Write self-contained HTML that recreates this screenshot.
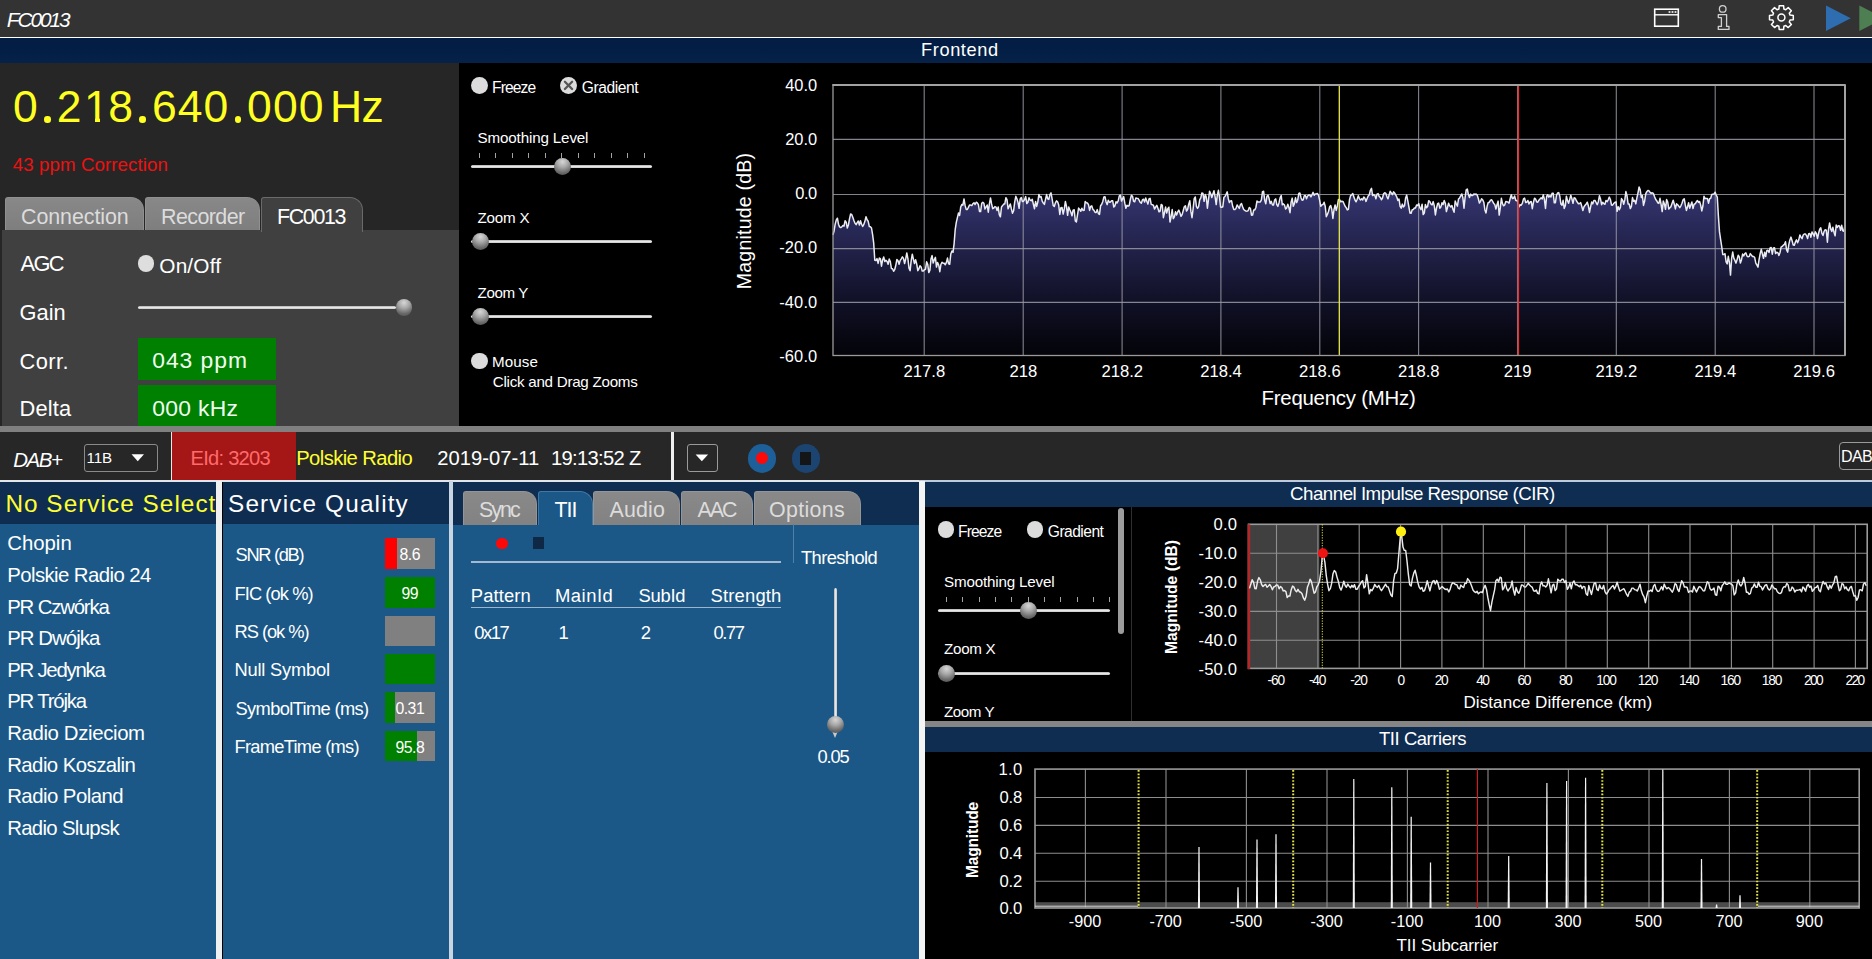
<!DOCTYPE html>
<html><head><meta charset="utf-8"><title>FC0013</title>
<style>
html,body{margin:0;padding:0;background:#000;}
body{width:1872px;height:959px;position:relative;overflow:hidden;font-family:"Liberation Sans", sans-serif;}
.t{position:absolute;white-space:pre;}
.b{position:absolute;}
svg{position:absolute;left:0;top:0;}
</style></head><body>
<div class="b" style="left:0px;top:0px;width:1872px;height:37px;background:#333333;"></div>
<div class="b" style="left:0px;top:37px;width:1872px;height:1px;background:#ffffff;"></div>
<div class="b" style="left:0px;top:38px;width:1872px;height:25px;background:linear-gradient(#031c44,#031f45 60%,#06224a);"></div>
<div class="t" id="title" style="left:6.80px;top:10.18px;font-size:20.8px;line-height:20.8px;color:#fff;font-style:italic;letter-spacing:-2.044px;">FC0013</div>
<div class="t" id="frontend" style="left:921.00px;top:41.40px;font-size:18.2px;line-height:18.2px;color:#fff;letter-spacing:0.617px;">Frontend</div>
<svg width="1872" height="40" viewBox="0 0 1872 40">
<rect x="1654.7" y="9.2" width="23.6" height="17" fill="none" stroke="#fff" stroke-width="1.6"/>
<line x1="1654" y1="14.8" x2="1679" y2="14.8" stroke="#fff" stroke-width="1.4"/>
<g fill="#fff"><rect x="1668.6" y="11.2" width="1.8" height="1.6"/><rect x="1671.6" y="11.2" width="1.8" height="1.6"/><rect x="1674.6" y="11.2" width="1.8" height="1.6"/></g>
<circle cx="1722.7" cy="8.9" r="3.3" fill="none" stroke="#d0d0d0" stroke-width="1.3"/>
<path d="M1718.3 14.6 H1726.6 V26.4 H1729 V29.4 H1718.3 V26.4 H1721.4 V17.6 H1718.3 Z" fill="none" stroke="#d0d0d0" stroke-width="1.3" stroke-linejoin="round"/>
<path id="gear" d="M1793.30 15.39 L1793.30 19.81 L1790.05 20.08 L1789.27 21.96 L1791.37 24.45 L1788.25 27.57 L1785.76 25.47 L1783.88 26.25 L1783.61 29.50 L1779.19 29.50 L1778.92 26.25 L1777.04 25.47 L1774.55 27.57 L1771.43 24.45 L1773.53 21.96 L1772.75 20.08 L1769.50 19.81 L1769.50 15.39 L1772.75 15.12 L1773.53 13.24 L1771.43 10.75 L1774.55 7.63 L1777.04 9.73 L1778.92 8.95 L1779.19 5.70 L1783.61 5.70 L1783.88 8.95 L1785.76 9.73 L1788.25 7.63 L1791.37 10.75 L1789.27 13.24 L1790.05 15.12 Z" fill="none" stroke="#fff" stroke-width="1.5" stroke-linejoin="round"/>
<circle cx="1781.4" cy="17.6" r="3.5" fill="none" stroke="#fff" stroke-width="1.5"/>
<path d="M1826 5.6 L1850.8 18.2 L1826 31 Z" fill="#2d6db0"/>
<path d="M1859.3 5.6 L1884 18.2 L1859.3 31 Z" fill="#4e7f52"/>
</svg>
<div class="b" style="left:0px;top:63px;width:459px;height:363px;background:#262626;"></div>
<div class="t" style="left:12.6px;top:84.8px;width:25.8px;text-align:center;font-size:44.5px;line-height:44.5px;color:#ffff21;">0</div>
<div class="b" style="left:44.0px;top:116.4px;width:6.5px;height:6.5px;border-radius:50%;background:#ffff21;"></div>
<div class="t" style="left:56.2px;top:84.8px;width:25.8px;text-align:center;font-size:44.5px;line-height:44.5px;color:#ffff21;">2</div>
<div class="t" style="left:83.6px;top:84.8px;width:25.8px;text-align:center;font-size:44.5px;line-height:44.5px;color:#ffff21;">1</div>
<div class="b" style="left:84.0px;top:118.3px;width:11.3px;height:4.6px;background:#262626;"></div>
<div class="b" style="left:100.0px;top:118.3px;width:9px;height:4.6px;background:#262626;"></div>
<div class="t" style="left:107.8px;top:84.8px;width:25.8px;text-align:center;font-size:44.5px;line-height:44.5px;color:#ffff21;">8</div>
<div class="b" style="left:139.2px;top:116.4px;width:6.5px;height:6.5px;border-radius:50%;background:#ffff21;"></div>
<div class="t" style="left:151.4px;top:84.8px;width:25.8px;text-align:center;font-size:44.5px;line-height:44.5px;color:#ffff21;">6</div>
<div class="t" style="left:177.2px;top:84.8px;width:25.8px;text-align:center;font-size:44.5px;line-height:44.5px;color:#ffff21;">4</div>
<div class="t" style="left:203.0px;top:84.8px;width:25.8px;text-align:center;font-size:44.5px;line-height:44.5px;color:#ffff21;">0</div>
<div class="b" style="left:234.5px;top:116.4px;width:6.5px;height:6.5px;border-radius:50%;background:#ffff21;"></div>
<div class="t" style="left:246.6px;top:84.8px;width:25.8px;text-align:center;font-size:44.5px;line-height:44.5px;color:#ffff21;">0</div>
<div class="t" style="left:272.4px;top:84.8px;width:25.8px;text-align:center;font-size:44.5px;line-height:44.5px;color:#ffff21;">0</div>
<div class="t" style="left:298.2px;top:84.8px;width:25.8px;text-align:center;font-size:44.5px;line-height:44.5px;color:#ffff21;">0</div>
<div class="t" style="left:330.0px;top:84.8px;font-size:44.5px;line-height:44.5px;color:#ffff21;letter-spacing:-0.6px">Hz</div>
<div class="t" id="ppm" style="left:12.80px;top:156.14px;font-size:18.72px;line-height:18.72px;color:#ee1111;letter-spacing:0.078px;">43 ppm Correction</div>
<div class="b" style="left:5px;top:197px;width:139px;height:34px;background:linear-gradient(#888,#7e7e7e);border:1px solid #909090;border-bottom:none;border-radius:3px 13px 0 0;box-sizing:border-box;"></div>
<div class="b" style="left:145px;top:197px;width:115px;height:34px;background:linear-gradient(#888,#7e7e7e);border:1px solid #909090;border-bottom:none;border-radius:3px 13px 0 0;box-sizing:border-box;"></div>
<div class="b" style="left:2px;top:230.3px;width:457px;height:195.7px;background:#404040;"></div>
<div class="b" style="left:261px;top:197px;width:101.5px;height:35px;background:#404040;border:1px solid #6a6a6a;border-bottom:none;border-radius:3px 13px 0 0;box-sizing:border-box;"></div>
<div class="t" id="tab_conn" style="left:21.00px;top:206.99px;font-size:21.42px;line-height:21.42px;color:#dcdcdc;letter-spacing:-0.066px;">Connection</div>
<div class="t" id="tab_rec" style="left:161.00px;top:206.99px;font-size:21.42px;line-height:21.42px;color:#dcdcdc;letter-spacing:-0.559px;">Recorder</div>
<div class="t" id="tab_fc" style="left:277.00px;top:206.99px;font-size:21.42px;line-height:21.42px;color:#fff;letter-spacing:-1.350px;">FC0013</div>
<div class="t" id="agc" style="left:20.60px;top:252.68px;font-size:21.84px;line-height:21.84px;color:#fff;letter-spacing:-1.669px;">AGC</div>
<div class="b" style="left:137.5px;top:255px;width:16.6px;height:16.6px;border-radius:50%;background:#dedede;"></div>
<div class="t" id="onoff" style="left:159.30px;top:255.80px;font-size:20.8px;line-height:20.8px;color:#fff;letter-spacing:0.160px;">On/Off</div>
<div class="t" id="gain" style="left:19.60px;top:301.58px;font-size:21.84px;line-height:21.84px;color:#fff;letter-spacing:-0.023px;">Gain</div>
<div class="b" style="left:138px;top:306px;width:258px;height:3px;background:linear-gradient(#b0b0b0,#ececec 55%,#c4c4c4);border-radius:1.5px;"></div>
<div class="b" style="left:395.7px;top:299.3px;width:16.6px;height:16.6px;border-radius:50%;background:radial-gradient(circle at 50% 22%,#d6d6d6 0%,#a8a8a8 35%,#6a6a6a 70%,#4a4a4a 100%);"></div>
<div class="t" id="corr" style="left:19.60px;top:350.78px;font-size:21.84px;line-height:21.84px;color:#fff;letter-spacing:0.416px;">Corr.</div>
<div class="b" style="left:138px;top:338px;width:137.5px;height:41.5px;background:#008000;"></div>
<div class="t" id="corrv" style="left:152.20px;top:348.86px;font-size:22.88px;line-height:22.88px;color:#f0fff0;letter-spacing:0.972px;">043 ppm</div>
<div class="t" id="delta" style="left:19.60px;top:398.18px;font-size:21.84px;line-height:21.84px;color:#fff;letter-spacing:0.146px;">Delta</div>
<div class="b" style="left:138px;top:385px;width:137.5px;height:41px;background:#008000;"></div>
<div class="t" id="deltav" style="left:152.20px;top:396.86px;font-size:22.88px;line-height:22.88px;color:#f0fff0;letter-spacing:0.304px;">000 kHz</div>
<div class="b" style="left:471.0px;top:77.0px;width:16.8px;height:16.8px;border-radius:50%;background:#dcdcdc;"></div>
<div class="t" id="freeze1" style="left:492.00px;top:79.60px;font-size:15.6px;line-height:15.6px;color:#fff;letter-spacing:-0.892px;">Freeze</div>
<div class="b" style="left:560.1px;top:77.0px;width:16.8px;height:16.8px;border-radius:50%;background:#dcdcdc;"></div>
<svg width="1872" height="959" style="pointer-events:none"><path d="M564.9 81.80000000000001 L572.1 89.0 M572.1 81.80000000000001 L564.9 89.0" stroke="#555" stroke-width="2.3" stroke-linecap="round"/></svg>
<div class="t" id="grad1" style="left:581.80px;top:79.60px;font-size:15.6px;line-height:15.6px;color:#fff;letter-spacing:-0.440px;">Gradient</div>
<div class="t" id="smooth1" style="left:477.60px;top:130.41px;font-size:15.18px;line-height:15.18px;color:#fff;letter-spacing:-0.153px;">Smoothing Level</div>
<div class="b" style="left:478.9px;top:153px;width:1px;height:5px;background:#a4a4a4;"></div>
<div class="b" style="left:495.4px;top:153px;width:1px;height:5px;background:#a4a4a4;"></div>
<div class="b" style="left:511.8px;top:153px;width:1px;height:5px;background:#a4a4a4;"></div>
<div class="b" style="left:528.3px;top:153px;width:1px;height:5px;background:#a4a4a4;"></div>
<div class="b" style="left:544.7px;top:153px;width:1px;height:5px;background:#a4a4a4;"></div>
<div class="b" style="left:561.2px;top:153px;width:1px;height:5px;background:#a4a4a4;"></div>
<div class="b" style="left:577.7px;top:153px;width:1px;height:5px;background:#a4a4a4;"></div>
<div class="b" style="left:594.1px;top:153px;width:1px;height:5px;background:#a4a4a4;"></div>
<div class="b" style="left:610.6px;top:153px;width:1px;height:5px;background:#a4a4a4;"></div>
<div class="b" style="left:627.0px;top:153px;width:1px;height:5px;background:#a4a4a4;"></div>
<div class="b" style="left:643.5px;top:153px;width:1px;height:5px;background:#a4a4a4;"></div>
<div class="b" style="left:471.2px;top:164.9px;width:181.2px;height:3px;background:linear-gradient(#b0b0b0,#ececec 55%,#c4c4c4);border-radius:1.5px;"></div>
<div class="b" style="left:553.5px;top:158.2px;width:17px;height:17px;border-radius:50%;background:radial-gradient(circle at 50% 22%,#d6d6d6 0%,#a8a8a8 35%,#6a6a6a 70%,#4a4a4a 100%);"></div>
<div class="t" id="zoomx1" style="left:477.60px;top:209.81px;font-size:15.18px;line-height:15.18px;color:#fff;letter-spacing:-0.239px;">Zoom X</div>
<div class="b" style="left:471.2px;top:239.9px;width:181.2px;height:3px;background:linear-gradient(#b0b0b0,#ececec 55%,#c4c4c4);border-radius:1.5px;"></div>
<div class="b" style="left:471.5px;top:233.2px;width:17px;height:17px;border-radius:50%;background:radial-gradient(circle at 50% 22%,#d6d6d6 0%,#a8a8a8 35%,#6a6a6a 70%,#4a4a4a 100%);"></div>
<div class="t" id="zoomy1" style="left:477.60px;top:285.41px;font-size:15.18px;line-height:15.18px;color:#fff;letter-spacing:-0.419px;">Zoom Y</div>
<div class="b" style="left:471.2px;top:314.7px;width:181.2px;height:3px;background:linear-gradient(#b0b0b0,#ececec 55%,#c4c4c4);border-radius:1.5px;"></div>
<div class="b" style="left:471.5px;top:308.0px;width:17px;height:17px;border-radius:50%;background:radial-gradient(circle at 50% 22%,#d6d6d6 0%,#a8a8a8 35%,#6a6a6a 70%,#4a4a4a 100%);"></div>
<div class="b" style="left:471.0px;top:352.6px;width:16.8px;height:16.8px;border-radius:50%;background:#dcdcdc;"></div>
<div class="t" id="mouse" style="left:492.00px;top:354.41px;font-size:15.18px;line-height:15.18px;color:#fff;letter-spacing:0.100px;">Mouse</div>
<div class="t" id="cdz" style="left:492.80px;top:374.21px;font-size:15.18px;line-height:15.18px;color:#fff;letter-spacing:-0.268px;">Click and Drag Zooms</div>
<div class="b" style="left:0px;top:426px;width:1872px;height:6px;background:#808080;"></div>
<div class="b" style="left:0px;top:432px;width:1872px;height:48.4px;background:#272727;"></div>
<div class="t" id="dab" style="left:13.20px;top:449.95px;font-size:20.49px;line-height:20.49px;color:#fff;font-style:italic;letter-spacing:-1.406px;">DAB+</div>
<div class="b" style="left:83.5px;top:444px;width:74px;height:27.5px;border:1px solid #8a8a8a;border-radius:3px;box-sizing:border-box;"></div>
<div class="t" id="ch11b" style="left:86.60px;top:449.81px;font-size:15.18px;line-height:15.18px;color:#fff;letter-spacing:-0.175px;">11B</div>
<svg width="1872" height="959"><path d="M131.5 454.3 H144 L137.75 461.2 Z" fill="#fff"/><path d="M695.6 454.4 H708.1 L701.85 461.2 Z" fill="#fff"/></svg>
<div class="b" style="left:171px;top:432px;width:1px;height:49px;background:#e8e8e8;"></div>
<div class="b" style="left:172px;top:432px;width:124px;height:49px;background:#a51616;"></div>
<div class="t" id="eid" style="left:190.60px;top:448.11px;font-size:20.18px;line-height:20.18px;color:#ff6a6a;letter-spacing:-0.780px;">EId: 3203</div>
<div class="t" id="polskie" style="left:296.20px;top:448.11px;font-size:20.18px;line-height:20.18px;color:#ffff30;letter-spacing:-0.568px;">Polskie Radio</div>
<div class="t" id="date" style="left:437.20px;top:448.11px;font-size:20.18px;line-height:20.18px;color:#fff;letter-spacing:0.037px;">2019-07-11</div>
<div class="t" id="time" style="left:551.00px;top:448.11px;font-size:20.18px;line-height:20.18px;color:#fff;letter-spacing:-0.681px;">19:13:52 Z</div>
<div class="b" style="left:671px;top:432px;width:3px;height:49px;background:#f0f0f0;"></div>
<div class="b" style="left:687.2px;top:444.2px;width:30.8px;height:27.6px;border:1.2px solid #9a9a9a;border-radius:3px;box-sizing:border-box;"></div>
<div class="b" style="left:748px;top:444.4px;width:28px;height:28.2px;border-radius:50%;background:#1d5f98;"></div>
<div class="b" style="left:755.9px;top:452.3px;width:12.2px;height:12.2px;border-radius:50%;background:#ff0808;"></div>
<div class="b" style="left:792px;top:444.4px;width:27.8px;height:28.2px;border-radius:50%;background:#1c4470;"></div>
<div class="b" style="left:800px;top:452.3px;width:10.9px;height:12.3px;background:#131517;"></div>
<div class="b" style="left:1839px;top:442px;width:40px;height:28px;border:1px solid #9a9a9a;border-radius:4px;box-sizing:border-box;background:#262626"></div>
<div class="t" id="dabbtn" style="left:1841.00px;top:447.99px;font-size:16.02px;line-height:16.02px;color:#fff;letter-spacing:-0.624px;">DAB</div>
<div class="b" style="left:0px;top:480.2px;width:919px;height:1.7px;background:#e0e5ec;"></div>
<div class="b" style="left:919px;top:480.2px;width:953px;height:1.8px;background:#bccbde;"></div>
<div class="b" style="left:0px;top:482px;width:216px;height:42.4px;background:#0f2c51;"></div>
<div class="b" style="left:0px;top:524.4px;width:216px;height:435px;background:#1b5887;"></div>
<div class="b" style="left:0;top:482px;width:216px;height:42px;overflow:hidden;">
<div class="t" id="nosvc" style="left:5.40px;top:492.33px;font-size:24.34px;line-height:24.34px;color:#ffff30;letter-spacing:1.038px;position:absolute;margin-top:-482px;">No Service Select</div>
</div>
<div class="t" id="svc0" style="left:7.20px;top:532.81px;font-size:20.38px;line-height:20.38px;color:#fff;letter-spacing:0.001px;">Chopin</div>
<div class="t" id="svc1" style="left:7.20px;top:564.81px;font-size:20.38px;line-height:20.38px;color:#fff;letter-spacing:-0.577px;">Polskie Radio 24</div>
<div class="t" id="svc2" style="left:7.20px;top:597.01px;font-size:20.38px;line-height:20.38px;color:#fff;letter-spacing:-1.167px;">PR Czwórka</div>
<div class="t" id="svc3" style="left:7.20px;top:627.91px;font-size:20.38px;line-height:20.38px;color:#fff;letter-spacing:-0.946px;">PR Dwójka</div>
<div class="t" id="svc4" style="left:7.20px;top:659.81px;font-size:20.38px;line-height:20.38px;color:#fff;letter-spacing:-1.239px;">PR Jedynka</div>
<div class="t" id="svc5" style="left:7.20px;top:691.21px;font-size:20.38px;line-height:20.38px;color:#fff;letter-spacing:-1.191px;">PR Trójka</div>
<div class="t" id="svc6" style="left:7.20px;top:722.71px;font-size:20.38px;line-height:20.38px;color:#fff;letter-spacing:-0.362px;">Radio Dzieciom</div>
<div class="t" id="svc7" style="left:7.20px;top:754.51px;font-size:20.38px;line-height:20.38px;color:#fff;letter-spacing:-0.553px;">Radio Koszalin</div>
<div class="t" id="svc8" style="left:7.20px;top:785.81px;font-size:20.38px;line-height:20.38px;color:#fff;letter-spacing:-0.529px;">Radio Poland</div>
<div class="t" id="svc9" style="left:7.20px;top:817.61px;font-size:20.38px;line-height:20.38px;color:#fff;letter-spacing:-0.689px;">Radio Slupsk</div>
<div class="b" style="left:216px;top:481px;width:6.4px;height:478px;background:#f0f0f0;"></div>
<div class="b" style="left:222.5px;top:482px;width:226.5px;height:42px;background:#0f2c51;"></div>
<div class="b" style="left:222.5px;top:524px;width:226.5px;height:435px;background:#1b5887;"></div>
<div class="t" id="sq" style="left:228.00px;top:492.33px;font-size:24.34px;line-height:24.34px;color:#fff;letter-spacing:1.155px;">Service Quality</div>
<div class="t" id="sq0" style="left:235.50px;top:546.15px;font-size:18.3px;line-height:18.3px;color:#fff;letter-spacing:-1.304px;">SNR (dB)</div>
<div class="t" id="sq1" style="left:234.50px;top:585.15px;font-size:18.3px;line-height:18.3px;color:#fff;letter-spacing:-0.917px;">FIC (ok %)</div>
<div class="t" id="sq2" style="left:234.50px;top:623.35px;font-size:18.3px;line-height:18.3px;color:#fff;letter-spacing:-1.026px;">RS (ok %)</div>
<div class="t" id="sq3" style="left:234.50px;top:660.55px;font-size:18.3px;line-height:18.3px;color:#fff;letter-spacing:-0.197px;">Null Symbol</div>
<div class="t" id="sq4" style="left:235.50px;top:699.65px;font-size:18.3px;line-height:18.3px;color:#fff;letter-spacing:-0.639px;">SymbolTime (ms)</div>
<div class="t" id="sq5" style="left:234.50px;top:737.55px;font-size:18.3px;line-height:18.3px;color:#fff;letter-spacing:-0.715px;">FrameTime (ms)</div>
<div class="b" style="left:384.6px;top:538.1px;width:50.3px;height:30.7px;background:#808080;"></div>
<div class="b" style="left:384.6px;top:538.1px;width:12.5px;height:30.7px;background:#ff0000;"></div>
<div class="t" id="bar0" style="left:309.80px;width:200px;text-align:center;top:546.70px;font-size:15.81px;line-height:15.81px;color:#fff;letter-spacing:-0.5px;padding-left:-0.5px;box-sizing:border-box;">8.6</div>
<div class="b" style="left:384.6px;top:576.9px;width:50.3px;height:30.7px;background:#808080;"></div>
<div class="b" style="left:384.6px;top:576.9px;width:50.3px;height:30.7px;background:#008000;"></div>
<div class="t" id="bar1" style="left:309.80px;width:200px;text-align:center;top:586.10px;font-size:15.81px;line-height:15.81px;color:#fff;letter-spacing:-0.5px;padding-left:-0.5px;box-sizing:border-box;">99</div>
<div class="b" style="left:384.6px;top:615.6px;width:50.3px;height:30.7px;background:#808080;"></div>
<div class="b" style="left:384.6px;top:653.6px;width:50.3px;height:30.7px;background:#808080;"></div>
<div class="b" style="left:384.6px;top:653.6px;width:50.3px;height:30.7px;background:#008000;"></div>
<div class="b" style="left:384.6px;top:692.2px;width:50.3px;height:30.7px;background:#808080;"></div>
<div class="b" style="left:384.6px;top:692.2px;width:10.5px;height:30.7px;background:#008000;"></div>
<div class="t" id="bar4" style="left:309.80px;width:200px;text-align:center;top:701.30px;font-size:15.81px;line-height:15.81px;color:#fff;letter-spacing:-0.5px;padding-left:-0.5px;box-sizing:border-box;">0.31</div>
<div class="b" style="left:384.6px;top:730.5px;width:50.3px;height:30.7px;background:#808080;"></div>
<div class="b" style="left:384.6px;top:730.5px;width:32.3px;height:30.7px;background:#008000;"></div>
<div class="t" id="bar5" style="left:309.80px;width:200px;text-align:center;top:739.50px;font-size:15.81px;line-height:15.81px;color:#fff;letter-spacing:-0.5px;padding-left:-0.5px;box-sizing:border-box;">95.8</div>
<div class="b" style="left:448.8px;top:481px;width:4.5px;height:478px;background:#c9d5e3;"></div>
<div class="b" style="left:453.2px;top:482px;width:465.8px;height:42.6px;background:#0f2c51;"></div>
<div class="b" style="left:453.2px;top:524.6px;width:465.8px;height:435px;background:#1b5887;"></div>
<div class="b" style="left:463px;top:491px;width:74.20000000000005px;height:33.8px;background:linear-gradient(#8a8989,#838282);border:1px solid #959595;border-bottom:none;border-radius:3px 13px 0 0;box-sizing:border-box;"></div>
<div class="b" style="left:538.2px;top:491px;width:54.39999999999998px;height:34px;background:#1b5887;border:1px solid #3f78a6;border-bottom:none;border-radius:3px 13px 0 0;box-sizing:border-box;"></div>
<div class="b" style="left:593.2px;top:491px;width:87.0px;height:33.8px;background:linear-gradient(#8a8989,#838282);border:1px solid #959595;border-bottom:none;border-radius:3px 13px 0 0;box-sizing:border-box;"></div>
<div class="b" style="left:681px;top:491px;width:72px;height:33.8px;background:linear-gradient(#8a8989,#838282);border:1px solid #959595;border-bottom:none;border-radius:3px 13px 0 0;box-sizing:border-box;"></div>
<div class="b" style="left:754px;top:491px;width:107.20000000000005px;height:33.8px;background:linear-gradient(#8a8989,#838282);border:1px solid #959595;border-bottom:none;border-radius:3px 13px 0 0;box-sizing:border-box;"></div>
<div class="t" id="t_sync" style="left:479.00px;top:499.79px;font-size:21.42px;line-height:21.42px;color:#dcdcdc;letter-spacing:-1.962px;">Sync</div>
<div class="t" id="t_tii" style="left:554.50px;top:499.79px;font-size:21.42px;line-height:21.42px;color:#fff;letter-spacing:-1.012px;">TII</div>
<div class="t" id="t_audio" style="left:609.50px;top:499.79px;font-size:21.42px;line-height:21.42px;color:#dcdcdc;letter-spacing:0.164px;">Audio</div>
<div class="t" id="t_aac" style="left:697.50px;top:499.79px;font-size:21.42px;line-height:21.42px;color:#dcdcdc;letter-spacing:-2.028px;">AAC</div>
<div class="t" id="t_opt" style="left:769.00px;top:499.79px;font-size:21.42px;line-height:21.42px;color:#dcdcdc;letter-spacing:0.322px;">Options</div>
<div class="b" style="left:496.2px;top:537.5px;width:11.6px;height:11.6px;border-radius:50%;background:#ff0808;"></div>
<div class="b" style="left:533px;top:537px;width:11px;height:11.8px;background:#0e2846;"></div>
<div class="b" style="left:471px;top:561.3px;width:310px;height:1.7px;background:#a3b9cf;"></div>
<div class="b" style="left:793px;top:524px;width:1px;height:39px;background:#4f7fa6;"></div>
<div class="t" id="thr" style="left:801.00px;top:548.65px;font-size:18.3px;line-height:18.3px;color:#fff;letter-spacing:-0.578px;">Threshold</div>
<div class="t" id="th0" style="left:470.80px;top:587.29px;font-size:18.41px;line-height:18.41px;color:#fff;letter-spacing:0.099px;">Pattern</div>
<div class="t" id="th1" style="left:554.90px;top:587.29px;font-size:18.41px;line-height:18.41px;color:#fff;letter-spacing:0.538px;">MainId</div>
<div class="t" id="th2" style="left:638.50px;top:587.29px;font-size:18.41px;line-height:18.41px;color:#fff;letter-spacing:-0.291px;">SubId</div>
<div class="t" id="th3" style="left:710.60px;top:587.29px;font-size:18.41px;line-height:18.41px;color:#fff;letter-spacing:0.165px;">Strength</div>
<div class="b" style="left:471px;top:607px;width:310px;height:1.1px;background:#9db4ca;"></div>
<div class="t" id="tr0" style="left:474.20px;top:623.60px;font-size:18.41px;line-height:18.41px;color:#fff;letter-spacing:-1.492px;">0x17</div>
<div class="t" id="tr1" style="left:558.60px;top:623.60px;font-size:18.41px;line-height:18.41px;color:#fff;letter-spacing:-3.000px;">1</div>
<div class="t" id="tr2" style="left:640.70px;top:623.60px;font-size:18.41px;line-height:18.41px;color:#fff;letter-spacing:-0.900px;">2</div>
<div class="t" id="tr3" style="left:713.40px;top:623.60px;font-size:18.41px;line-height:18.41px;color:#fff;letter-spacing:-1.396px;">0.77</div>
<div class="b" style="left:833.5px;top:588px;width:3px;height:142px;background:linear-gradient(90deg,#b0b0b0,#ececec 55%,#c4c4c4);border-radius:1.5px;"></div>
<svg width="1872" height="959"><path d="M832 731 L838 731 L835 738 Z" fill="#c8c8c8"/></svg>
<div class="b" style="left:826.5px;top:716.0px;width:17px;height:17px;border-radius:50%;background:radial-gradient(circle at 50% 22%,#d6d6d6 0%,#a8a8a8 35%,#6a6a6a 70%,#4a4a4a 100%);"></div>
<div class="t" id="thrv" style="left:817.50px;top:747.65px;font-size:18.3px;line-height:18.3px;color:#fff;letter-spacing:-1.138px;">0.05</div>
<div class="b" style="left:918.9px;top:481px;width:6.3px;height:478px;background:#f4f4f4;"></div>
<svg width="1872" height="430" viewBox="0 0 1872 430">
<defs><linearGradient id="sg" x1="0" y1="85" x2="0" y2="356" gradientUnits="userSpaceOnUse"><stop offset="0" stop-color="#5c5cc2"/><stop offset="0.5" stop-color="#2b2b5c"/><stop offset="0.78" stop-color="#12122a"/><stop offset="1" stop-color="#030308"/></linearGradient></defs>
<polygon points="833.0,355.5 833.0,234.9 834.1,230.7 835.2,224.1 836.3,219.9 837.4,218.2 838.5,224.2 839.6,226.9 840.7,227.6 841.8,226.9 842.9,225.5 844.0,226.1 845.1,220.7 846.2,222.1 847.3,228.0 848.4,225.0 849.5,218.8 850.6,214.0 851.7,214.4 852.8,217.3 853.9,220.5 855.0,223.1 856.1,224.7 857.2,222.6 858.3,221.0 859.4,225.0 860.5,220.7 861.6,224.2 862.7,226.5 863.8,224.4 864.9,221.3 866.0,216.7 867.1,219.8 868.2,221.3 869.3,226.5 870.4,226.7 871.5,228.0 872.6,234.6 873.7,243.2 874.8,260.3 875.9,260.6 877.0,258.6 878.1,263.4 879.3,258.1 880.4,258.6 881.5,266.2 882.6,260.0 883.7,256.9 884.8,261.5 885.9,260.4 887.0,261.3 888.1,264.3 889.2,259.1 890.3,261.5 891.4,268.5 892.5,268.8 893.6,271.3 894.7,269.7 895.8,265.3 896.9,259.5 898.0,260.8 899.1,264.2 900.2,260.4 901.3,258.8 902.4,256.9 903.5,258.4 904.6,263.6 905.7,258.9 906.8,252.9 907.9,258.6 909.0,268.1 910.1,270.7 911.2,260.6 912.3,254.2 913.4,259.1 914.5,263.5 915.6,259.8 916.7,263.9 917.8,270.7 918.9,268.8 920.0,265.7 921.1,266.9 922.2,271.0 923.3,271.0 924.4,269.7 925.5,269.3 926.6,261.8 927.7,264.2 928.8,272.6 929.9,270.2 931.0,258.9 932.1,255.6 933.2,263.1 934.3,259.7 935.4,257.4 936.5,267.1 937.6,262.5 938.7,265.0 939.8,271.7 940.9,264.5 942.0,262.2 943.1,263.2 944.2,263.3 945.3,264.8 946.4,262.4 947.5,258.1 948.6,263.8 949.7,264.2 950.8,254.0 951.9,250.9 953.0,252.3 954.1,243.8 955.2,229.7 956.3,222.3 957.4,217.6 958.5,212.9 959.6,215.5 960.7,207.1 961.8,204.5 962.9,205.2 964.0,198.9 965.1,205.4 966.2,209.4 967.3,209.5 968.4,207.4 969.5,205.0 970.6,205.1 971.8,205.6 972.9,203.7 974.0,202.7 975.1,204.5 976.2,202.2 977.3,202.9 978.4,204.7 979.5,211.5 980.6,211.6 981.7,203.3 982.8,202.3 983.9,203.4 985.0,209.0 986.1,207.0 987.2,205.0 988.3,212.2 989.4,203.8 990.5,198.0 991.6,203.9 992.7,208.7 993.8,208.0 994.9,206.6 996.0,207.1 997.1,210.5 998.2,206.9 999.3,214.6 1000.4,216.8 1001.5,206.9 1002.6,205.6 1003.7,204.1 1004.8,203.9 1005.9,197.7 1007.0,199.6 1008.1,208.8 1009.2,206.4 1010.3,204.0 1011.4,208.9 1012.5,213.2 1013.6,210.8 1014.7,202.1 1015.8,196.3 1016.9,198.8 1018.0,202.4 1019.1,208.3 1020.2,198.9 1021.3,197.5 1022.4,201.6 1023.5,201.2 1024.6,199.5 1025.7,196.6 1026.8,203.6 1027.9,202.2 1029.0,197.8 1030.1,200.0 1031.2,200.7 1032.3,199.3 1033.4,204.3 1034.5,208.7 1035.6,201.4 1036.7,206.4 1037.8,202.1 1038.9,194.4 1040.0,197.1 1041.1,196.6 1042.2,201.1 1043.3,203.0 1044.4,204.4 1045.5,199.4 1046.6,194.6 1047.7,198.8 1048.8,199.4 1049.9,194.6 1051.0,192.9 1052.1,198.8 1053.2,205.4 1054.3,206.5 1055.4,202.9 1056.5,200.9 1057.6,201.8 1058.7,205.0 1059.8,214.4 1060.9,207.7 1062.0,207.5 1063.2,214.0 1064.3,208.9 1065.4,201.4 1066.5,206.3 1067.6,215.3 1068.7,207.0 1069.8,209.7 1070.9,212.2 1072.0,215.8 1073.1,210.1 1074.2,209.8 1075.3,221.0 1076.4,222.0 1077.5,214.9 1078.6,208.1 1079.7,209.5 1080.8,211.3 1081.9,208.2 1083.0,210.5 1084.1,210.3 1085.2,201.5 1086.3,202.7 1087.4,203.0 1088.5,204.6 1089.6,210.4 1090.7,206.5 1091.8,205.9 1092.9,209.4 1094.0,210.3 1095.1,212.5 1096.2,212.5 1097.3,209.6 1098.4,213.6 1099.5,214.4 1100.6,205.7 1101.7,204.2 1102.8,201.4 1103.9,197.0 1105.0,196.7 1106.1,202.0 1107.2,204.6 1108.3,200.3 1109.4,202.2 1110.5,202.1 1111.6,200.8 1112.7,200.8 1113.8,207.1 1114.9,205.9 1116.0,201.8 1117.1,202.9 1118.2,200.9 1119.3,195.8 1120.4,195.1 1121.5,201.1 1122.6,198.9 1123.7,196.6 1124.8,203.2 1125.9,208.3 1127.0,205.3 1128.1,206.2 1129.2,205.6 1130.3,199.5 1131.4,195.2 1132.5,196.2 1133.6,201.3 1134.7,201.7 1135.8,198.1 1136.9,198.3 1138.0,198.4 1139.1,200.2 1140.2,202.3 1141.3,203.3 1142.4,199.9 1143.5,199.2 1144.6,202.0 1145.7,197.9 1146.8,201.3 1147.9,204.1 1149.0,199.0 1150.1,198.4 1151.2,204.4 1152.3,204.8 1153.4,205.2 1154.5,209.0 1155.7,207.0 1156.8,205.3 1157.9,208.2 1159.0,211.7 1160.1,211.2 1161.2,204.4 1162.3,205.4 1163.4,217.7 1164.5,212.6 1165.6,207.1 1166.7,213.1 1167.8,208.7 1168.9,207.2 1170.0,222.0 1171.1,216.8 1172.2,209.5 1173.3,218.7 1174.4,216.8 1175.5,211.8 1176.6,215.1 1177.7,212.0 1178.8,210.1 1179.9,212.8 1181.0,216.4 1182.1,214.6 1183.2,210.7 1184.3,206.7 1185.4,205.7 1186.5,211.1 1187.6,209.5 1188.7,204.2 1189.8,200.8 1190.9,211.4 1192.0,217.7 1193.1,209.0 1194.2,198.7 1195.3,197.0 1196.4,206.4 1197.5,208.4 1198.6,206.6 1199.7,199.9 1200.8,197.8 1201.9,193.0 1203.0,193.5 1204.1,201.3 1205.2,194.6 1206.3,197.1 1207.4,208.2 1208.5,199.4 1209.6,191.2 1210.7,193.7 1211.8,197.5 1212.9,194.0 1214.0,190.8 1215.1,196.8 1216.2,204.6 1217.3,195.1 1218.4,190.3 1219.5,197.2 1220.6,207.1 1221.7,207.3 1222.8,206.8 1223.9,197.4 1225.0,196.5 1226.1,194.4 1227.2,191.9 1228.3,198.7 1229.4,202.5 1230.5,200.9 1231.6,200.8 1232.7,206.3 1233.8,209.5 1234.9,209.6 1236.0,208.4 1237.1,204.9 1238.2,206.7 1239.3,208.4 1240.4,204.7 1241.5,203.5 1242.6,206.8 1243.7,209.5 1244.8,210.3 1245.9,211.1 1247.1,211.2 1248.2,210.6 1249.3,207.5 1250.4,208.3 1251.5,215.2 1252.6,215.1 1253.7,209.9 1254.8,209.9 1255.9,207.5 1257.0,201.0 1258.1,202.1 1259.2,202.0 1260.3,202.0 1261.4,199.8 1262.5,191.6 1263.6,191.3 1264.7,200.2 1265.8,203.7 1266.9,196.3 1268.0,195.3 1269.1,198.6 1270.2,203.6 1271.3,201.4 1272.4,204.9 1273.5,205.1 1274.6,200.1 1275.7,198.9 1276.8,204.7 1277.9,206.4 1279.0,202.9 1280.1,197.9 1281.2,195.5 1282.3,204.8 1283.4,203.9 1284.5,205.1 1285.6,209.0 1286.7,207.9 1287.8,204.3 1288.9,207.5 1290.0,212.7 1291.1,202.2 1292.2,198.1 1293.3,206.3 1294.4,203.7 1295.5,197.8 1296.6,202.6 1297.7,200.2 1298.8,193.5 1299.9,193.0 1301.0,197.7 1302.1,200.2 1303.2,199.7 1304.3,195.8 1305.4,195.6 1306.5,198.7 1307.6,196.0 1308.7,195.1 1309.8,195.0 1310.9,196.8 1312.0,194.8 1313.1,192.4 1314.2,195.3 1315.3,193.9 1316.4,193.8 1317.5,193.6 1318.6,195.3 1319.7,200.7 1320.8,206.3 1321.9,204.9 1323.0,204.5 1324.1,202.2 1325.2,206.2 1326.3,216.7 1327.4,214.4 1328.5,211.5 1329.6,207.0 1330.7,205.5 1331.8,209.5 1332.9,218.5 1334.0,209.6 1335.1,204.9 1336.2,210.4 1337.3,206.1 1338.4,199.6 1339.6,199.7 1340.7,201.8 1341.8,201.2 1342.9,201.4 1344.0,203.7 1345.1,206.2 1346.2,207.6 1347.3,209.9 1348.4,209.4 1349.5,199.8 1350.6,195.6 1351.7,194.8 1352.8,193.6 1353.9,196.9 1355.0,200.0 1356.1,201.8 1357.2,199.3 1358.3,195.8 1359.4,198.6 1360.5,200.0 1361.6,198.9 1362.7,199.9 1363.8,197.0 1364.9,198.3 1366.0,201.4 1367.1,198.5 1368.2,196.0 1369.3,194.7 1370.4,190.3 1371.5,188.3 1372.6,195.6 1373.7,194.6 1374.8,195.3 1375.9,198.8 1377.0,194.2 1378.1,193.6 1379.2,196.5 1380.3,197.4 1381.4,199.8 1382.5,198.0 1383.6,193.8 1384.7,192.7 1385.8,193.3 1386.9,196.6 1388.0,198.8 1389.1,195.0 1390.2,191.3 1391.3,193.0 1392.4,194.7 1393.5,191.9 1394.6,193.0 1395.7,194.9 1396.8,197.0 1397.9,200.4 1399.0,199.0 1400.1,206.4 1401.2,208.2 1402.3,204.1 1403.4,206.9 1404.5,205.8 1405.6,198.1 1406.7,195.1 1407.8,200.9 1408.9,207.0 1410.0,213.0 1411.1,213.3 1412.2,209.8 1413.3,209.5 1414.4,208.0 1415.5,208.0 1416.6,204.9 1417.7,205.5 1418.8,203.7 1419.9,207.9 1421.0,209.7 1422.1,204.2 1423.2,214.6 1424.3,213.1 1425.4,204.4 1426.5,207.7 1427.6,206.5 1428.7,200.7 1429.8,201.6 1430.9,204.0 1432.1,204.9 1433.2,201.6 1434.3,205.9 1435.4,214.9 1436.5,208.2 1437.6,203.7 1438.7,203.1 1439.8,208.2 1440.9,206.9 1442.0,202.8 1443.1,204.5 1444.2,200.4 1445.3,203.2 1446.4,211.6 1447.5,207.5 1448.6,203.2 1449.7,205.7 1450.8,206.9 1451.9,205.5 1453.0,209.5 1454.1,212.2 1455.2,201.0 1456.3,203.8 1457.4,206.1 1458.5,199.1 1459.6,197.9 1460.7,195.8 1461.8,194.0 1462.9,197.8 1464.0,208.2 1465.1,197.4 1466.2,189.9 1467.3,189.0 1468.4,194.6 1469.5,197.4 1470.6,194.1 1471.7,195.5 1472.8,195.4 1473.9,194.0 1475.0,194.6 1476.1,194.0 1477.2,195.1 1478.3,198.5 1479.4,203.0 1480.5,201.3 1481.6,198.7 1482.7,199.9 1483.8,202.2 1484.9,209.9 1486.0,213.0 1487.1,206.3 1488.2,202.5 1489.3,202.4 1490.4,200.4 1491.5,199.7 1492.6,201.4 1493.7,203.4 1494.8,204.6 1495.9,209.0 1497.0,204.7 1498.1,201.1 1499.2,215.1 1500.3,207.9 1501.4,198.3 1502.5,203.7 1503.6,205.8 1504.7,205.0 1505.8,201.6 1506.9,201.8 1508.0,202.1 1509.1,203.1 1510.2,198.4 1511.3,194.7 1512.4,198.5 1513.5,198.3 1514.6,196.0 1515.7,200.3 1516.8,200.8 1517.9,201.0 1519.0,207.0 1520.1,204.8 1521.2,205.2 1522.3,203.4 1523.5,198.9 1524.6,198.1 1525.7,202.5 1526.8,202.2 1527.9,200.5 1529.0,203.9 1530.1,201.9 1531.2,201.5 1532.3,208.7 1533.4,202.5 1534.5,198.2 1535.6,199.1 1536.7,202.1 1537.8,202.2 1538.9,200.2 1540.0,199.0 1541.1,197.8 1542.2,198.9 1543.3,194.8 1544.4,199.4 1545.5,208.5 1546.6,196.5 1547.7,194.7 1548.8,197.1 1549.9,195.7 1551.0,196.9 1552.1,193.3 1553.2,193.2 1554.3,202.8 1555.4,202.7 1556.5,195.1 1557.6,193.0 1558.7,192.6 1559.8,196.1 1560.9,204.1 1562.0,205.3 1563.1,200.3 1564.2,208.5 1565.3,205.8 1566.4,196.2 1567.5,200.6 1568.6,203.3 1569.7,199.4 1570.8,195.3 1571.9,198.8 1573.0,203.3 1574.1,197.8 1575.2,198.1 1576.3,200.5 1577.4,202.3 1578.5,203.8 1579.6,203.5 1580.7,202.6 1581.8,206.5 1582.9,210.6 1584.0,206.7 1585.1,205.2 1586.2,204.0 1587.3,202.2 1588.4,206.0 1589.5,212.4 1590.6,206.9 1591.7,201.9 1592.8,203.9 1593.9,200.4 1595.0,200.4 1596.1,202.5 1597.2,204.7 1598.3,202.0 1599.4,195.8 1600.5,198.9 1601.6,204.7 1602.7,202.2 1603.8,203.6 1604.9,204.3 1606.0,200.4 1607.1,201.6 1608.2,199.8 1609.3,197.1 1610.4,199.5 1611.5,205.0 1612.6,205.2 1613.7,203.6 1614.8,202.4 1616.0,201.9 1617.1,211.3 1618.2,206.7 1619.3,209.8 1620.4,207.4 1621.5,198.6 1622.6,200.1 1623.7,204.2 1624.8,199.9 1625.9,191.6 1627.0,195.7 1628.1,203.9 1629.2,204.0 1630.3,208.6 1631.4,206.4 1632.5,197.6 1633.6,201.3 1634.7,200.4 1635.8,203.9 1636.9,197.9 1638.0,192.8 1639.1,187.0 1640.2,189.8 1641.3,197.5 1642.4,195.6 1643.5,205.4 1644.6,201.3 1645.7,193.9 1646.8,191.7 1647.9,190.5 1649.0,190.8 1650.1,192.4 1651.2,193.3 1652.3,192.8 1653.4,193.4 1654.5,196.6 1655.6,199.2 1656.7,200.7 1657.8,202.9 1658.9,203.4 1660.0,198.3 1661.1,204.5 1662.2,211.6 1663.3,200.9 1664.4,203.9 1665.5,209.3 1666.6,199.6 1667.7,202.0 1668.8,209.1 1669.9,207.7 1671.0,206.6 1672.1,203.3 1673.2,200.3 1674.3,204.2 1675.4,208.9 1676.5,203.8 1677.6,204.8 1678.7,206.1 1679.8,207.6 1680.9,205.8 1682.0,203.2 1683.1,199.7 1684.2,198.7 1685.3,205.0 1686.4,210.4 1687.5,207.1 1688.6,202.7 1689.7,208.2 1690.8,205.0 1691.9,202.0 1693.0,208.6 1694.1,204.3 1695.2,203.8 1696.3,202.0 1697.4,200.5 1698.5,202.4 1699.6,201.5 1700.7,205.3 1701.8,210.9 1702.9,206.0 1704.0,196.2 1705.1,198.6 1706.2,198.4 1707.4,198.4 1708.5,203.2 1709.6,198.7 1710.7,198.3 1711.8,194.4 1712.9,194.2 1714.0,194.1 1715.1,192.2 1716.2,195.0 1717.3,197.2 1718.4,216.1 1719.5,231.9 1720.6,239.4 1721.7,246.5 1722.8,254.6 1723.9,254.5 1725.0,253.7 1726.1,261.8 1727.2,263.9 1728.3,256.3 1729.4,262.4 1730.5,275.1 1731.6,258.7 1732.7,252.0 1733.8,258.1 1734.9,260.4 1736.0,263.1 1737.1,259.6 1738.2,255.2 1739.3,256.8 1740.4,263.1 1741.5,259.7 1742.6,254.1 1743.7,255.9 1744.8,253.7 1745.9,252.9 1747.0,256.1 1748.1,256.8 1749.2,256.4 1750.3,253.6 1751.4,255.1 1752.5,256.4 1753.6,256.4 1754.7,257.6 1755.8,263.1 1756.9,265.0 1758.0,267.2 1759.1,259.4 1760.2,253.5 1761.3,249.2 1762.4,254.0 1763.5,258.3 1764.6,252.3 1765.7,256.5 1766.8,250.7 1767.9,250.2 1769.0,252.5 1770.1,248.0 1771.2,247.5 1772.3,254.2 1773.4,248.0 1774.5,247.7 1775.6,253.6 1776.7,252.2 1777.8,252.6 1778.9,255.4 1780.0,252.5 1781.1,247.1 1782.2,246.4 1783.3,245.2 1784.4,244.5 1785.5,241.8 1786.6,250.0 1787.7,252.2 1788.8,244.6 1789.9,239.9 1791.0,237.1 1792.1,240.7 1793.2,245.0 1794.3,245.2 1795.4,241.9 1796.5,239.9 1797.6,242.7 1798.7,240.1 1799.9,234.9 1801.0,237.2 1802.1,238.6 1803.2,235.0 1804.3,234.0 1805.4,233.9 1806.5,235.6 1807.6,238.5 1808.7,233.7 1809.8,233.4 1810.9,237.2 1812.0,231.9 1813.1,233.8 1814.2,236.3 1815.3,231.8 1816.4,233.4 1817.5,238.5 1818.6,233.3 1819.7,229.3 1820.8,227.8 1821.9,233.3 1823.0,235.5 1824.1,231.4 1825.2,229.7 1826.3,230.1 1827.4,242.2 1828.5,229.4 1829.6,222.9 1830.7,228.9 1831.8,231.5 1832.9,227.3 1834.0,232.2 1835.1,235.8 1836.2,225.0 1837.3,227.4 1838.4,225.7 1839.5,226.0 1840.6,230.3 1841.7,225.3 1842.8,230.9 1843.9,231.3 1845.0,224.7 1845.0,355.5" fill="url(#sg)"/>
<line x1="924.2" y1="84.9" x2="924.2" y2="355.5" stroke="#9a9aa6" stroke-width="1.1" opacity="0.85"/>
<line x1="1023.2" y1="84.9" x2="1023.2" y2="355.5" stroke="#9a9aa6" stroke-width="1.1" opacity="0.85"/>
<line x1="1122.1" y1="84.9" x2="1122.1" y2="355.5" stroke="#9a9aa6" stroke-width="1.1" opacity="0.85"/>
<line x1="1220.9" y1="84.9" x2="1220.9" y2="355.5" stroke="#9a9aa6" stroke-width="1.1" opacity="0.85"/>
<line x1="1319.8" y1="84.9" x2="1319.8" y2="355.5" stroke="#9a9aa6" stroke-width="1.1" opacity="0.85"/>
<line x1="1418.6" y1="84.9" x2="1418.6" y2="355.5" stroke="#9a9aa6" stroke-width="1.1" opacity="0.85"/>
<line x1="1517.5" y1="84.9" x2="1517.5" y2="355.5" stroke="#9a9aa6" stroke-width="1.1" opacity="0.85"/>
<line x1="1616.3" y1="84.9" x2="1616.3" y2="355.5" stroke="#9a9aa6" stroke-width="1.1" opacity="0.85"/>
<line x1="1715.2" y1="84.9" x2="1715.2" y2="355.5" stroke="#9a9aa6" stroke-width="1.1" opacity="0.85"/>
<line x1="1814.0" y1="84.9" x2="1814.0" y2="355.5" stroke="#9a9aa6" stroke-width="1.1" opacity="0.85"/>
<line x1="833.0" y1="139.4" x2="1845.0" y2="139.4" stroke="#9a9aa6" stroke-width="1.1" opacity="0.85"/>
<line x1="833.0" y1="194.5" x2="1845.0" y2="194.5" stroke="#9a9aa6" stroke-width="1.1" opacity="0.85"/>
<line x1="833.0" y1="248.6" x2="1845.0" y2="248.6" stroke="#9a9aa6" stroke-width="1.1" opacity="0.85"/>
<line x1="833.0" y1="302.4" x2="1845.0" y2="302.4" stroke="#9a9aa6" stroke-width="1.1" opacity="0.85"/>
<polyline points="833.0,234.9 834.1,230.7 835.2,224.1 836.3,219.9 837.4,218.2 838.5,224.2 839.6,226.9 840.7,227.6 841.8,226.9 842.9,225.5 844.0,226.1 845.1,220.7 846.2,222.1 847.3,228.0 848.4,225.0 849.5,218.8 850.6,214.0 851.7,214.4 852.8,217.3 853.9,220.5 855.0,223.1 856.1,224.7 857.2,222.6 858.3,221.0 859.4,225.0 860.5,220.7 861.6,224.2 862.7,226.5 863.8,224.4 864.9,221.3 866.0,216.7 867.1,219.8 868.2,221.3 869.3,226.5 870.4,226.7 871.5,228.0 872.6,234.6 873.7,243.2 874.8,260.3 875.9,260.6 877.0,258.6 878.1,263.4 879.3,258.1 880.4,258.6 881.5,266.2 882.6,260.0 883.7,256.9 884.8,261.5 885.9,260.4 887.0,261.3 888.1,264.3 889.2,259.1 890.3,261.5 891.4,268.5 892.5,268.8 893.6,271.3 894.7,269.7 895.8,265.3 896.9,259.5 898.0,260.8 899.1,264.2 900.2,260.4 901.3,258.8 902.4,256.9 903.5,258.4 904.6,263.6 905.7,258.9 906.8,252.9 907.9,258.6 909.0,268.1 910.1,270.7 911.2,260.6 912.3,254.2 913.4,259.1 914.5,263.5 915.6,259.8 916.7,263.9 917.8,270.7 918.9,268.8 920.0,265.7 921.1,266.9 922.2,271.0 923.3,271.0 924.4,269.7 925.5,269.3 926.6,261.8 927.7,264.2 928.8,272.6 929.9,270.2 931.0,258.9 932.1,255.6 933.2,263.1 934.3,259.7 935.4,257.4 936.5,267.1 937.6,262.5 938.7,265.0 939.8,271.7 940.9,264.5 942.0,262.2 943.1,263.2 944.2,263.3 945.3,264.8 946.4,262.4 947.5,258.1 948.6,263.8 949.7,264.2 950.8,254.0 951.9,250.9 953.0,252.3 954.1,243.8 955.2,229.7 956.3,222.3 957.4,217.6 958.5,212.9 959.6,215.5 960.7,207.1 961.8,204.5 962.9,205.2 964.0,198.9 965.1,205.4 966.2,209.4 967.3,209.5 968.4,207.4 969.5,205.0 970.6,205.1 971.8,205.6 972.9,203.7 974.0,202.7 975.1,204.5 976.2,202.2 977.3,202.9 978.4,204.7 979.5,211.5 980.6,211.6 981.7,203.3 982.8,202.3 983.9,203.4 985.0,209.0 986.1,207.0 987.2,205.0 988.3,212.2 989.4,203.8 990.5,198.0 991.6,203.9 992.7,208.7 993.8,208.0 994.9,206.6 996.0,207.1 997.1,210.5 998.2,206.9 999.3,214.6 1000.4,216.8 1001.5,206.9 1002.6,205.6 1003.7,204.1 1004.8,203.9 1005.9,197.7 1007.0,199.6 1008.1,208.8 1009.2,206.4 1010.3,204.0 1011.4,208.9 1012.5,213.2 1013.6,210.8 1014.7,202.1 1015.8,196.3 1016.9,198.8 1018.0,202.4 1019.1,208.3 1020.2,198.9 1021.3,197.5 1022.4,201.6 1023.5,201.2 1024.6,199.5 1025.7,196.6 1026.8,203.6 1027.9,202.2 1029.0,197.8 1030.1,200.0 1031.2,200.7 1032.3,199.3 1033.4,204.3 1034.5,208.7 1035.6,201.4 1036.7,206.4 1037.8,202.1 1038.9,194.4 1040.0,197.1 1041.1,196.6 1042.2,201.1 1043.3,203.0 1044.4,204.4 1045.5,199.4 1046.6,194.6 1047.7,198.8 1048.8,199.4 1049.9,194.6 1051.0,192.9 1052.1,198.8 1053.2,205.4 1054.3,206.5 1055.4,202.9 1056.5,200.9 1057.6,201.8 1058.7,205.0 1059.8,214.4 1060.9,207.7 1062.0,207.5 1063.2,214.0 1064.3,208.9 1065.4,201.4 1066.5,206.3 1067.6,215.3 1068.7,207.0 1069.8,209.7 1070.9,212.2 1072.0,215.8 1073.1,210.1 1074.2,209.8 1075.3,221.0 1076.4,222.0 1077.5,214.9 1078.6,208.1 1079.7,209.5 1080.8,211.3 1081.9,208.2 1083.0,210.5 1084.1,210.3 1085.2,201.5 1086.3,202.7 1087.4,203.0 1088.5,204.6 1089.6,210.4 1090.7,206.5 1091.8,205.9 1092.9,209.4 1094.0,210.3 1095.1,212.5 1096.2,212.5 1097.3,209.6 1098.4,213.6 1099.5,214.4 1100.6,205.7 1101.7,204.2 1102.8,201.4 1103.9,197.0 1105.0,196.7 1106.1,202.0 1107.2,204.6 1108.3,200.3 1109.4,202.2 1110.5,202.1 1111.6,200.8 1112.7,200.8 1113.8,207.1 1114.9,205.9 1116.0,201.8 1117.1,202.9 1118.2,200.9 1119.3,195.8 1120.4,195.1 1121.5,201.1 1122.6,198.9 1123.7,196.6 1124.8,203.2 1125.9,208.3 1127.0,205.3 1128.1,206.2 1129.2,205.6 1130.3,199.5 1131.4,195.2 1132.5,196.2 1133.6,201.3 1134.7,201.7 1135.8,198.1 1136.9,198.3 1138.0,198.4 1139.1,200.2 1140.2,202.3 1141.3,203.3 1142.4,199.9 1143.5,199.2 1144.6,202.0 1145.7,197.9 1146.8,201.3 1147.9,204.1 1149.0,199.0 1150.1,198.4 1151.2,204.4 1152.3,204.8 1153.4,205.2 1154.5,209.0 1155.7,207.0 1156.8,205.3 1157.9,208.2 1159.0,211.7 1160.1,211.2 1161.2,204.4 1162.3,205.4 1163.4,217.7 1164.5,212.6 1165.6,207.1 1166.7,213.1 1167.8,208.7 1168.9,207.2 1170.0,222.0 1171.1,216.8 1172.2,209.5 1173.3,218.7 1174.4,216.8 1175.5,211.8 1176.6,215.1 1177.7,212.0 1178.8,210.1 1179.9,212.8 1181.0,216.4 1182.1,214.6 1183.2,210.7 1184.3,206.7 1185.4,205.7 1186.5,211.1 1187.6,209.5 1188.7,204.2 1189.8,200.8 1190.9,211.4 1192.0,217.7 1193.1,209.0 1194.2,198.7 1195.3,197.0 1196.4,206.4 1197.5,208.4 1198.6,206.6 1199.7,199.9 1200.8,197.8 1201.9,193.0 1203.0,193.5 1204.1,201.3 1205.2,194.6 1206.3,197.1 1207.4,208.2 1208.5,199.4 1209.6,191.2 1210.7,193.7 1211.8,197.5 1212.9,194.0 1214.0,190.8 1215.1,196.8 1216.2,204.6 1217.3,195.1 1218.4,190.3 1219.5,197.2 1220.6,207.1 1221.7,207.3 1222.8,206.8 1223.9,197.4 1225.0,196.5 1226.1,194.4 1227.2,191.9 1228.3,198.7 1229.4,202.5 1230.5,200.9 1231.6,200.8 1232.7,206.3 1233.8,209.5 1234.9,209.6 1236.0,208.4 1237.1,204.9 1238.2,206.7 1239.3,208.4 1240.4,204.7 1241.5,203.5 1242.6,206.8 1243.7,209.5 1244.8,210.3 1245.9,211.1 1247.1,211.2 1248.2,210.6 1249.3,207.5 1250.4,208.3 1251.5,215.2 1252.6,215.1 1253.7,209.9 1254.8,209.9 1255.9,207.5 1257.0,201.0 1258.1,202.1 1259.2,202.0 1260.3,202.0 1261.4,199.8 1262.5,191.6 1263.6,191.3 1264.7,200.2 1265.8,203.7 1266.9,196.3 1268.0,195.3 1269.1,198.6 1270.2,203.6 1271.3,201.4 1272.4,204.9 1273.5,205.1 1274.6,200.1 1275.7,198.9 1276.8,204.7 1277.9,206.4 1279.0,202.9 1280.1,197.9 1281.2,195.5 1282.3,204.8 1283.4,203.9 1284.5,205.1 1285.6,209.0 1286.7,207.9 1287.8,204.3 1288.9,207.5 1290.0,212.7 1291.1,202.2 1292.2,198.1 1293.3,206.3 1294.4,203.7 1295.5,197.8 1296.6,202.6 1297.7,200.2 1298.8,193.5 1299.9,193.0 1301.0,197.7 1302.1,200.2 1303.2,199.7 1304.3,195.8 1305.4,195.6 1306.5,198.7 1307.6,196.0 1308.7,195.1 1309.8,195.0 1310.9,196.8 1312.0,194.8 1313.1,192.4 1314.2,195.3 1315.3,193.9 1316.4,193.8 1317.5,193.6 1318.6,195.3 1319.7,200.7 1320.8,206.3 1321.9,204.9 1323.0,204.5 1324.1,202.2 1325.2,206.2 1326.3,216.7 1327.4,214.4 1328.5,211.5 1329.6,207.0 1330.7,205.5 1331.8,209.5 1332.9,218.5 1334.0,209.6 1335.1,204.9 1336.2,210.4 1337.3,206.1 1338.4,199.6 1339.6,199.7 1340.7,201.8 1341.8,201.2 1342.9,201.4 1344.0,203.7 1345.1,206.2 1346.2,207.6 1347.3,209.9 1348.4,209.4 1349.5,199.8 1350.6,195.6 1351.7,194.8 1352.8,193.6 1353.9,196.9 1355.0,200.0 1356.1,201.8 1357.2,199.3 1358.3,195.8 1359.4,198.6 1360.5,200.0 1361.6,198.9 1362.7,199.9 1363.8,197.0 1364.9,198.3 1366.0,201.4 1367.1,198.5 1368.2,196.0 1369.3,194.7 1370.4,190.3 1371.5,188.3 1372.6,195.6 1373.7,194.6 1374.8,195.3 1375.9,198.8 1377.0,194.2 1378.1,193.6 1379.2,196.5 1380.3,197.4 1381.4,199.8 1382.5,198.0 1383.6,193.8 1384.7,192.7 1385.8,193.3 1386.9,196.6 1388.0,198.8 1389.1,195.0 1390.2,191.3 1391.3,193.0 1392.4,194.7 1393.5,191.9 1394.6,193.0 1395.7,194.9 1396.8,197.0 1397.9,200.4 1399.0,199.0 1400.1,206.4 1401.2,208.2 1402.3,204.1 1403.4,206.9 1404.5,205.8 1405.6,198.1 1406.7,195.1 1407.8,200.9 1408.9,207.0 1410.0,213.0 1411.1,213.3 1412.2,209.8 1413.3,209.5 1414.4,208.0 1415.5,208.0 1416.6,204.9 1417.7,205.5 1418.8,203.7 1419.9,207.9 1421.0,209.7 1422.1,204.2 1423.2,214.6 1424.3,213.1 1425.4,204.4 1426.5,207.7 1427.6,206.5 1428.7,200.7 1429.8,201.6 1430.9,204.0 1432.1,204.9 1433.2,201.6 1434.3,205.9 1435.4,214.9 1436.5,208.2 1437.6,203.7 1438.7,203.1 1439.8,208.2 1440.9,206.9 1442.0,202.8 1443.1,204.5 1444.2,200.4 1445.3,203.2 1446.4,211.6 1447.5,207.5 1448.6,203.2 1449.7,205.7 1450.8,206.9 1451.9,205.5 1453.0,209.5 1454.1,212.2 1455.2,201.0 1456.3,203.8 1457.4,206.1 1458.5,199.1 1459.6,197.9 1460.7,195.8 1461.8,194.0 1462.9,197.8 1464.0,208.2 1465.1,197.4 1466.2,189.9 1467.3,189.0 1468.4,194.6 1469.5,197.4 1470.6,194.1 1471.7,195.5 1472.8,195.4 1473.9,194.0 1475.0,194.6 1476.1,194.0 1477.2,195.1 1478.3,198.5 1479.4,203.0 1480.5,201.3 1481.6,198.7 1482.7,199.9 1483.8,202.2 1484.9,209.9 1486.0,213.0 1487.1,206.3 1488.2,202.5 1489.3,202.4 1490.4,200.4 1491.5,199.7 1492.6,201.4 1493.7,203.4 1494.8,204.6 1495.9,209.0 1497.0,204.7 1498.1,201.1 1499.2,215.1 1500.3,207.9 1501.4,198.3 1502.5,203.7 1503.6,205.8 1504.7,205.0 1505.8,201.6 1506.9,201.8 1508.0,202.1 1509.1,203.1 1510.2,198.4 1511.3,194.7 1512.4,198.5 1513.5,198.3 1514.6,196.0 1515.7,200.3 1516.8,200.8 1517.9,201.0 1519.0,207.0 1520.1,204.8 1521.2,205.2 1522.3,203.4 1523.5,198.9 1524.6,198.1 1525.7,202.5 1526.8,202.2 1527.9,200.5 1529.0,203.9 1530.1,201.9 1531.2,201.5 1532.3,208.7 1533.4,202.5 1534.5,198.2 1535.6,199.1 1536.7,202.1 1537.8,202.2 1538.9,200.2 1540.0,199.0 1541.1,197.8 1542.2,198.9 1543.3,194.8 1544.4,199.4 1545.5,208.5 1546.6,196.5 1547.7,194.7 1548.8,197.1 1549.9,195.7 1551.0,196.9 1552.1,193.3 1553.2,193.2 1554.3,202.8 1555.4,202.7 1556.5,195.1 1557.6,193.0 1558.7,192.6 1559.8,196.1 1560.9,204.1 1562.0,205.3 1563.1,200.3 1564.2,208.5 1565.3,205.8 1566.4,196.2 1567.5,200.6 1568.6,203.3 1569.7,199.4 1570.8,195.3 1571.9,198.8 1573.0,203.3 1574.1,197.8 1575.2,198.1 1576.3,200.5 1577.4,202.3 1578.5,203.8 1579.6,203.5 1580.7,202.6 1581.8,206.5 1582.9,210.6 1584.0,206.7 1585.1,205.2 1586.2,204.0 1587.3,202.2 1588.4,206.0 1589.5,212.4 1590.6,206.9 1591.7,201.9 1592.8,203.9 1593.9,200.4 1595.0,200.4 1596.1,202.5 1597.2,204.7 1598.3,202.0 1599.4,195.8 1600.5,198.9 1601.6,204.7 1602.7,202.2 1603.8,203.6 1604.9,204.3 1606.0,200.4 1607.1,201.6 1608.2,199.8 1609.3,197.1 1610.4,199.5 1611.5,205.0 1612.6,205.2 1613.7,203.6 1614.8,202.4 1616.0,201.9 1617.1,211.3 1618.2,206.7 1619.3,209.8 1620.4,207.4 1621.5,198.6 1622.6,200.1 1623.7,204.2 1624.8,199.9 1625.9,191.6 1627.0,195.7 1628.1,203.9 1629.2,204.0 1630.3,208.6 1631.4,206.4 1632.5,197.6 1633.6,201.3 1634.7,200.4 1635.8,203.9 1636.9,197.9 1638.0,192.8 1639.1,187.0 1640.2,189.8 1641.3,197.5 1642.4,195.6 1643.5,205.4 1644.6,201.3 1645.7,193.9 1646.8,191.7 1647.9,190.5 1649.0,190.8 1650.1,192.4 1651.2,193.3 1652.3,192.8 1653.4,193.4 1654.5,196.6 1655.6,199.2 1656.7,200.7 1657.8,202.9 1658.9,203.4 1660.0,198.3 1661.1,204.5 1662.2,211.6 1663.3,200.9 1664.4,203.9 1665.5,209.3 1666.6,199.6 1667.7,202.0 1668.8,209.1 1669.9,207.7 1671.0,206.6 1672.1,203.3 1673.2,200.3 1674.3,204.2 1675.4,208.9 1676.5,203.8 1677.6,204.8 1678.7,206.1 1679.8,207.6 1680.9,205.8 1682.0,203.2 1683.1,199.7 1684.2,198.7 1685.3,205.0 1686.4,210.4 1687.5,207.1 1688.6,202.7 1689.7,208.2 1690.8,205.0 1691.9,202.0 1693.0,208.6 1694.1,204.3 1695.2,203.8 1696.3,202.0 1697.4,200.5 1698.5,202.4 1699.6,201.5 1700.7,205.3 1701.8,210.9 1702.9,206.0 1704.0,196.2 1705.1,198.6 1706.2,198.4 1707.4,198.4 1708.5,203.2 1709.6,198.7 1710.7,198.3 1711.8,194.4 1712.9,194.2 1714.0,194.1 1715.1,192.2 1716.2,195.0 1717.3,197.2 1718.4,216.1 1719.5,231.9 1720.6,239.4 1721.7,246.5 1722.8,254.6 1723.9,254.5 1725.0,253.7 1726.1,261.8 1727.2,263.9 1728.3,256.3 1729.4,262.4 1730.5,275.1 1731.6,258.7 1732.7,252.0 1733.8,258.1 1734.9,260.4 1736.0,263.1 1737.1,259.6 1738.2,255.2 1739.3,256.8 1740.4,263.1 1741.5,259.7 1742.6,254.1 1743.7,255.9 1744.8,253.7 1745.9,252.9 1747.0,256.1 1748.1,256.8 1749.2,256.4 1750.3,253.6 1751.4,255.1 1752.5,256.4 1753.6,256.4 1754.7,257.6 1755.8,263.1 1756.9,265.0 1758.0,267.2 1759.1,259.4 1760.2,253.5 1761.3,249.2 1762.4,254.0 1763.5,258.3 1764.6,252.3 1765.7,256.5 1766.8,250.7 1767.9,250.2 1769.0,252.5 1770.1,248.0 1771.2,247.5 1772.3,254.2 1773.4,248.0 1774.5,247.7 1775.6,253.6 1776.7,252.2 1777.8,252.6 1778.9,255.4 1780.0,252.5 1781.1,247.1 1782.2,246.4 1783.3,245.2 1784.4,244.5 1785.5,241.8 1786.6,250.0 1787.7,252.2 1788.8,244.6 1789.9,239.9 1791.0,237.1 1792.1,240.7 1793.2,245.0 1794.3,245.2 1795.4,241.9 1796.5,239.9 1797.6,242.7 1798.7,240.1 1799.9,234.9 1801.0,237.2 1802.1,238.6 1803.2,235.0 1804.3,234.0 1805.4,233.9 1806.5,235.6 1807.6,238.5 1808.7,233.7 1809.8,233.4 1810.9,237.2 1812.0,231.9 1813.1,233.8 1814.2,236.3 1815.3,231.8 1816.4,233.4 1817.5,238.5 1818.6,233.3 1819.7,229.3 1820.8,227.8 1821.9,233.3 1823.0,235.5 1824.1,231.4 1825.2,229.7 1826.3,230.1 1827.4,242.2 1828.5,229.4 1829.6,222.9 1830.7,228.9 1831.8,231.5 1832.9,227.3 1834.0,232.2 1835.1,235.8 1836.2,225.0 1837.3,227.4 1838.4,225.7 1839.5,226.0 1840.6,230.3 1841.7,225.3 1842.8,230.9 1843.9,231.3 1845.0,224.7" fill="none" stroke="#ebebf2" stroke-width="1.5" stroke-linejoin="round"/>
<line x1="1339.3" y1="84.9" x2="1339.3" y2="355.5" stroke="#e8e84a" stroke-width="1.3"/>
<line x1="1518.3" y1="84.9" x2="1518.3" y2="355.5" stroke="#e03030" stroke-width="1.6"/>
<rect x="833.0" y="84.9" width="1012.0" height="270.6" fill="none" stroke="#9a9a9a" stroke-width="1.3"/>
<line x1="832.4" y1="84.9" x2="1845.6" y2="84.9" stroke="#a2a2a2" stroke-width="2"/>
<line x1="1845.0" y1="84.9" x2="1845.0" y2="355.5" stroke="#a2a2a2" stroke-width="2"/>
</svg>
<div class="t" id="sy0" style="left:785.20px;top:77.39px;font-size:16.43px;line-height:16.43px;color:#fff;letter-spacing:0.024px;">40.0</div>
<div class="t" id="sy1" style="left:785.20px;top:131.38px;font-size:16.43px;line-height:16.43px;color:#fff;letter-spacing:0.024px;">20.0</div>
<div class="t" id="sy2" style="left:795.30px;top:185.19px;font-size:16.43px;line-height:16.43px;color:#fff;letter-spacing:-0.448px;">0.0</div>
<div class="t" id="sy3" style="left:779.20px;top:239.19px;font-size:16.43px;line-height:16.43px;color:#fff;letter-spacing:0.151px;">-20.0</div>
<div class="t" id="sy4" style="left:779.20px;top:293.99px;font-size:16.43px;line-height:16.43px;color:#fff;letter-spacing:0.151px;">-40.0</div>
<div class="t" id="sy5" style="left:779.20px;top:348.38px;font-size:16.43px;line-height:16.43px;color:#fff;letter-spacing:0.151px;">-60.0</div>
<div class="t" id="sx0" style="left:903.50px;top:364.08px;font-size:16.64px;line-height:16.64px;color:#fff;letter-spacing:0.011px;">217.8</div>
<div class="t" id="sx1" style="left:1009.50px;top:364.08px;font-size:16.64px;line-height:16.64px;color:#fff;letter-spacing:-0.046px;">218</div>
<div class="t" id="sx2" style="left:1101.40px;top:364.08px;font-size:16.64px;line-height:16.64px;color:#fff;letter-spacing:0.011px;">218.2</div>
<div class="t" id="sx3" style="left:1200.20px;top:364.08px;font-size:16.64px;line-height:16.64px;color:#fff;letter-spacing:0.011px;">218.4</div>
<div class="t" id="sx4" style="left:1299.10px;top:364.08px;font-size:16.64px;line-height:16.64px;color:#fff;letter-spacing:0.011px;">218.6</div>
<div class="t" id="sx5" style="left:1397.90px;top:364.08px;font-size:16.64px;line-height:16.64px;color:#fff;letter-spacing:0.011px;">218.8</div>
<div class="t" id="sx6" style="left:1503.80px;top:364.08px;font-size:16.64px;line-height:16.64px;color:#fff;letter-spacing:-0.046px;">219</div>
<div class="t" id="sx7" style="left:1595.60px;top:364.08px;font-size:16.64px;line-height:16.64px;color:#fff;letter-spacing:0.011px;">219.2</div>
<div class="t" id="sx8" style="left:1694.50px;top:364.08px;font-size:16.64px;line-height:16.64px;color:#fff;letter-spacing:0.011px;">219.4</div>
<div class="t" id="sx9" style="left:1793.30px;top:364.08px;font-size:16.64px;line-height:16.64px;color:#fff;letter-spacing:0.011px;">219.6</div>
<div class="t" id="freqlab" style="left:1261.50px;top:388.21px;font-size:20.38px;line-height:20.38px;color:#fff;letter-spacing:-0.212px;">Frequency (MHz)</div>
<div class="t" id="maglab" style="left:744.4px;top:221px;font-size:19.6px;line-height:20px;color:#fff;transform:translate(-50%,-50%) rotate(-90deg);letter-spacing:0.174px">Magnitude (dB)</div>
<div class="b" style="left:925px;top:482px;width:947px;height:24.8px;background:#0f2c51;"></div>
<div class="t" id="cirtitle" style="left:1290.00px;top:484.94px;font-size:18.72px;line-height:18.72px;color:#fff;letter-spacing:-0.497px;">Channel Impulse Response (CIR)</div>
<div class="b" style="left:937.8px;top:521.3px;width:16.4px;height:16.4px;border-radius:50%;background:#dcdcdc;"></div>
<div class="t" id="freeze2" style="left:958.00px;top:523.60px;font-size:15.6px;line-height:15.6px;color:#fff;letter-spacing:-0.892px;">Freeze</div>
<div class="b" style="left:1026.5px;top:521.3px;width:16.4px;height:16.4px;border-radius:50%;background:#dcdcdc;"></div>
<div class="t" id="grad2" style="left:1047.80px;top:523.60px;font-size:15.6px;line-height:15.6px;color:#fff;letter-spacing:-0.525px;">Gradient</div>
<div class="b" style="left:1117.7px;top:508px;width:6.3px;height:126px;border-radius:3.2px;background:#9c9c9c;"></div>
<div class="b" style="left:1131px;top:507px;width:1px;height:214px;background:#2e2e2e;"></div>
<div class="t" id="smooth2" style="left:944.00px;top:573.81px;font-size:15.18px;line-height:15.18px;color:#fff;letter-spacing:-0.168px;">Smoothing Level</div>
<div class="b" style="left:946.1px;top:597.2px;width:1px;height:4.7999999999999545px;background:#a4a4a4;"></div>
<div class="b" style="left:962.4px;top:597.2px;width:1px;height:4.7999999999999545px;background:#a4a4a4;"></div>
<div class="b" style="left:978.7px;top:597.2px;width:1px;height:4.7999999999999545px;background:#a4a4a4;"></div>
<div class="b" style="left:995.0px;top:597.2px;width:1px;height:4.7999999999999545px;background:#a4a4a4;"></div>
<div class="b" style="left:1011.3px;top:597.2px;width:1px;height:4.7999999999999545px;background:#a4a4a4;"></div>
<div class="b" style="left:1027.6px;top:597.2px;width:1px;height:4.7999999999999545px;background:#a4a4a4;"></div>
<div class="b" style="left:1043.9px;top:597.2px;width:1px;height:4.7999999999999545px;background:#a4a4a4;"></div>
<div class="b" style="left:1060.2px;top:597.2px;width:1px;height:4.7999999999999545px;background:#a4a4a4;"></div>
<div class="b" style="left:1076.5px;top:597.2px;width:1px;height:4.7999999999999545px;background:#a4a4a4;"></div>
<div class="b" style="left:1092.8px;top:597.2px;width:1px;height:4.7999999999999545px;background:#a4a4a4;"></div>
<div class="b" style="left:1109.1px;top:597.2px;width:1px;height:4.7999999999999545px;background:#a4a4a4;"></div>
<div class="b" style="left:938px;top:608.9px;width:172px;height:3px;background:linear-gradient(#b0b0b0,#ececec 55%,#c4c4c4);border-radius:1.5px;"></div>
<div class="b" style="left:1019.5px;top:602.2px;width:17px;height:17px;border-radius:50%;background:radial-gradient(circle at 50% 22%,#d6d6d6 0%,#a8a8a8 35%,#6a6a6a 70%,#4a4a4a 100%);"></div>
<div class="t" id="zoomx2" style="left:944.00px;top:641.41px;font-size:15.18px;line-height:15.18px;color:#fff;letter-spacing:-0.279px;">Zoom X</div>
<div class="b" style="left:938px;top:671.5px;width:172px;height:3px;background:linear-gradient(#b0b0b0,#ececec 55%,#c4c4c4);border-radius:1.5px;"></div>
<div class="b" style="left:938.0px;top:664.8px;width:17px;height:17px;border-radius:50%;background:radial-gradient(circle at 50% 22%,#d6d6d6 0%,#a8a8a8 35%,#6a6a6a 70%,#4a4a4a 100%);"></div>
<div class="t" id="zoomy2" style="left:944.00px;top:704.21px;font-size:15.18px;line-height:15.18px;color:#fff;letter-spacing:-0.439px;">Zoom Y</div>
<div class="b" style="left:925px;top:720.5px;width:947px;height:6.7px;background:#858585;"></div>
<svg width="1872" height="959" viewBox="0 0 1872 959">
<rect x="1248.5" y="524.3" width="71.0" height="144.10000000000002" fill="#404040"/>
<line x1="1276.5" y1="524.3" x2="1276.5" y2="668.4" stroke="#8e8e8e" stroke-width="1.1"/>
<line x1="1317.9" y1="524.3" x2="1317.9" y2="668.4" stroke="#8e8e8e" stroke-width="1.1"/>
<line x1="1359.2" y1="524.3" x2="1359.2" y2="668.4" stroke="#8e8e8e" stroke-width="1.1"/>
<line x1="1400.6" y1="524.3" x2="1400.6" y2="668.4" stroke="#8e8e8e" stroke-width="1.1"/>
<line x1="1441.9" y1="524.3" x2="1441.9" y2="668.4" stroke="#8e8e8e" stroke-width="1.1"/>
<line x1="1483.3" y1="524.3" x2="1483.3" y2="668.4" stroke="#8e8e8e" stroke-width="1.1"/>
<line x1="1524.6" y1="524.3" x2="1524.6" y2="668.4" stroke="#8e8e8e" stroke-width="1.1"/>
<line x1="1566.0" y1="524.3" x2="1566.0" y2="668.4" stroke="#8e8e8e" stroke-width="1.1"/>
<line x1="1607.3" y1="524.3" x2="1607.3" y2="668.4" stroke="#8e8e8e" stroke-width="1.1"/>
<line x1="1648.7" y1="524.3" x2="1648.7" y2="668.4" stroke="#8e8e8e" stroke-width="1.1"/>
<line x1="1690.0" y1="524.3" x2="1690.0" y2="668.4" stroke="#8e8e8e" stroke-width="1.1"/>
<line x1="1731.4" y1="524.3" x2="1731.4" y2="668.4" stroke="#8e8e8e" stroke-width="1.1"/>
<line x1="1772.7" y1="524.3" x2="1772.7" y2="668.4" stroke="#8e8e8e" stroke-width="1.1"/>
<line x1="1814.1" y1="524.3" x2="1814.1" y2="668.4" stroke="#8e8e8e" stroke-width="1.1"/>
<line x1="1855.4" y1="524.3" x2="1855.4" y2="668.4" stroke="#8e8e8e" stroke-width="1.1"/>
<line x1="1248.5" y1="553.3" x2="1867.2" y2="553.3" stroke="#8e8e8e" stroke-width="1.1"/>
<line x1="1248.5" y1="582.4" x2="1867.2" y2="582.4" stroke="#8e8e8e" stroke-width="1.1"/>
<line x1="1248.5" y1="611.4" x2="1867.2" y2="611.4" stroke="#8e8e8e" stroke-width="1.1"/>
<line x1="1248.5" y1="640.2" x2="1867.2" y2="640.2" stroke="#8e8e8e" stroke-width="1.1"/>
<rect x="1248.5" y="524.3" width="618.7" height="144.10000000000002" fill="none" stroke="#9a9a9a" stroke-width="1.6"/>
<line x1="1248.9" y1="524.3" x2="1248.9" y2="669.0" stroke="#b02828" stroke-width="2.6"/>
<line x1="1322.3" y1="524.3" x2="1322.3" y2="668.4" stroke="#e6e640" stroke-width="1" stroke-dasharray="1.2 1.4"/>
<polyline points="1249.5,588.4 1250.8,584.3 1252.2,579.8 1253.5,582.1 1254.9,588.5 1256.2,588.7 1257.6,581.0 1258.9,577.6 1260.3,579.8 1261.6,584.5 1263.0,586.6 1264.3,585.2 1265.7,584.5 1267.0,587.3 1268.4,586.0 1269.7,584.5 1271.0,586.4 1272.4,589.8 1273.7,587.0 1275.1,586.3 1276.4,584.9 1277.8,585.3 1279.1,588.8 1280.5,586.5 1281.8,587.5 1283.2,590.9 1284.5,590.5 1285.9,591.6 1287.2,597.5 1288.5,596.0 1289.9,596.0 1291.2,589.7 1292.6,586.1 1293.9,587.1 1295.3,590.4 1296.6,591.8 1298.0,589.3 1299.3,591.7 1300.7,592.2 1302.0,593.7 1303.4,597.9 1304.7,600.2 1306.1,596.3 1307.4,587.3 1308.7,584.1 1310.1,579.2 1311.4,581.7 1312.8,587.7 1314.1,593.2 1315.5,591.9 1316.8,587.0 1318.2,584.8 1319.5,581.2 1320.9,571.8 1322.2,557.1 1323.6,555.6 1324.9,562.4 1326.3,575.8 1327.6,584.2 1328.9,590.7 1330.3,588.7 1331.6,583.6 1333.0,573.7 1334.3,570.6 1335.7,572.0 1337.0,577.1 1338.4,581.5 1339.7,587.4 1341.1,590.1 1342.4,586.4 1343.8,581.2 1345.1,585.5 1346.4,587.2 1347.8,584.1 1349.1,586.1 1350.5,587.8 1351.8,585.3 1353.2,587.2 1354.5,584.7 1355.9,589.2 1357.2,589.2 1358.6,586.5 1359.9,584.6 1361.3,582.1 1362.6,580.7 1364.0,587.9 1365.3,586.5 1366.6,574.7 1368.0,583.9 1369.3,593.8 1370.7,589.4 1372.0,590.7 1373.4,588.2 1374.7,584.5 1376.1,586.5 1377.4,587.4 1378.8,585.4 1380.1,588.6 1381.5,590.7 1382.8,588.7 1384.2,586.4 1385.5,584.2 1386.8,586.7 1388.2,586.9 1389.5,590.9 1390.9,595.0 1392.2,596.6 1393.6,580.9 1394.9,573.6 1396.3,573.0 1397.6,568.6 1399.0,552.1 1400.3,536.8 1401.7,536.1 1403.0,547.1 1404.3,550.4 1405.7,550.5 1407.0,561.0 1408.4,574.7 1409.7,584.7 1411.1,586.1 1412.4,578.4 1413.8,573.1 1415.1,570.2 1416.5,576.0 1417.8,582.4 1419.2,587.2 1420.5,589.0 1421.9,587.4 1423.2,591.3 1424.5,590.7 1425.9,586.2 1427.2,580.8 1428.6,586.3 1429.9,590.9 1431.3,584.9 1432.6,581.4 1434.0,580.6 1435.3,583.9 1436.7,580.5 1438.0,583.5 1439.4,589.2 1440.7,588.0 1442.1,586.6 1443.4,587.8 1444.7,589.0 1446.1,589.5 1447.4,589.0 1448.8,591.9 1450.1,589.4 1451.5,584.5 1452.8,582.8 1454.2,583.4 1455.5,584.6 1456.9,584.7 1458.2,588.1 1459.6,588.9 1460.9,585.1 1462.2,586.6 1463.6,587.5 1464.9,583.2 1466.3,583.4 1467.6,578.6 1469.0,580.4 1470.3,582.7 1471.7,586.3 1473.0,590.1 1474.4,591.7 1475.7,592.6 1477.1,591.3 1478.4,593.8 1479.8,592.4 1481.1,591.9 1482.4,592.7 1483.8,588.1 1485.1,585.3 1486.5,589.4 1487.8,597.4 1489.2,604.7 1490.5,610.7 1491.9,602.2 1493.2,596.1 1494.6,589.9 1495.9,580.7 1497.3,579.3 1498.6,581.7 1500.0,577.2 1501.3,577.9 1502.6,589.7 1504.0,587.8 1505.3,582.7 1506.7,588.6 1508.0,591.0 1509.4,588.6 1510.7,587.1 1512.1,581.0 1513.4,589.8 1514.8,595.1 1516.1,587.5 1517.5,591.8 1518.8,593.3 1520.1,590.2 1521.5,584.9 1522.8,585.1 1524.2,586.9 1525.5,587.1 1526.9,585.4 1528.2,583.3 1529.6,585.0 1530.9,586.2 1532.3,587.4 1533.6,590.8 1535.0,591.3 1536.3,590.1 1537.7,593.4 1539.0,593.9 1540.3,585.0 1541.7,581.9 1543.0,585.9 1544.4,585.8 1545.7,587.1 1547.1,585.3 1548.4,578.8 1549.8,585.9 1551.1,592.8 1552.5,585.4 1553.8,584.2 1555.2,590.6 1556.5,588.8 1557.8,579.2 1559.2,580.8 1560.5,581.1 1561.9,579.2 1563.2,579.3 1564.6,582.5 1565.9,580.6 1567.3,589.3 1568.6,587.4 1570.0,583.0 1571.3,588.8 1572.7,582.7 1574.0,580.9 1575.4,584.8 1576.7,584.6 1578.0,585.7 1579.4,586.7 1580.7,585.2 1582.1,588.6 1583.4,586.4 1584.8,586.9 1586.1,593.7 1587.5,595.3 1588.8,585.6 1590.2,590.6 1591.5,594.4 1592.9,588.1 1594.2,583.3 1595.6,582.9 1596.9,589.4 1598.2,590.5 1599.6,585.0 1600.9,588.2 1602.3,588.9 1603.6,585.5 1605.0,591.7 1606.3,594.0 1607.7,592.5 1609.0,589.7 1610.4,588.6 1611.7,586.7 1613.1,585.6 1614.4,589.1 1615.7,586.4 1617.1,582.2 1618.4,586.7 1619.8,591.1 1621.1,590.4 1622.5,589.5 1623.8,588.7 1625.2,591.2 1626.5,594.2 1627.9,596.4 1629.2,592.4 1630.6,591.1 1631.9,588.1 1633.3,588.1 1634.6,589.6 1635.9,589.9 1637.3,591.0 1638.6,588.0 1640.0,584.2 1641.3,590.6 1642.7,594.7 1644.0,596.9 1645.4,602.7 1646.7,596.3 1648.1,591.0 1649.4,591.3 1650.8,590.0 1652.1,591.5 1653.5,586.1 1654.8,584.4 1656.1,589.0 1657.5,591.2 1658.8,591.4 1660.2,589.3 1661.5,586.7 1662.9,590.0 1664.2,584.1 1665.6,587.3 1666.9,588.8 1668.3,587.5 1669.6,588.5 1671.0,590.3 1672.3,592.2 1673.6,589.2 1675.0,583.7 1676.3,584.6 1677.7,589.5 1679.0,591.5 1680.4,585.6 1681.7,580.8 1683.1,583.0 1684.4,587.0 1685.8,586.9 1687.1,587.5 1688.5,592.4 1689.8,591.1 1691.2,590.9 1692.5,592.0 1693.8,586.3 1695.2,589.4 1696.5,592.0 1697.9,588.9 1699.2,586.6 1700.6,587.2 1701.9,588.9 1703.3,590.9 1704.6,590.8 1706.0,586.1 1707.3,581.7 1708.7,582.9 1710.0,588.6 1711.4,590.2 1712.7,589.4 1714.0,588.1 1715.4,594.8 1716.7,595.2 1718.1,586.2 1719.4,587.0 1720.8,590.8 1722.1,585.8 1723.5,583.9 1724.8,581.8 1726.2,584.3 1727.5,584.3 1728.9,582.9 1730.2,583.7 1731.5,584.0 1732.9,585.8 1734.2,594.9 1735.6,592.9 1736.9,584.2 1738.3,579.9 1739.6,584.5 1741.0,585.9 1742.3,583.9 1743.7,577.5 1745.0,582.9 1746.4,592.2 1747.7,592.2 1749.1,594.3 1750.4,593.4 1751.7,588.1 1753.1,587.0 1754.4,583.9 1755.8,587.3 1757.1,587.3 1758.5,582.2 1759.8,586.2 1761.2,586.8 1762.5,590.0 1763.9,587.3 1765.2,585.2 1766.6,584.7 1767.9,588.5 1769.3,590.0 1770.6,588.7 1771.9,584.9 1773.3,587.2 1774.6,588.8 1776.0,588.8 1777.3,591.7 1778.7,593.1 1780.0,593.5 1781.4,592.7 1782.7,588.4 1784.1,586.6 1785.4,587.1 1786.8,583.4 1788.1,584.9 1789.4,590.8 1790.8,590.5 1792.1,587.1 1793.5,588.5 1794.8,592.0 1796.2,590.2 1797.5,590.2 1798.9,589.9 1800.2,589.3 1801.6,591.8 1802.9,587.0 1804.3,588.6 1805.6,591.2 1807.0,586.0 1808.3,584.4 1809.6,587.3 1811.0,586.1 1812.3,591.3 1813.7,589.8 1815.0,587.6 1816.4,587.3 1817.7,585.4 1819.1,590.5 1820.4,591.7 1821.8,585.4 1823.1,581.5 1824.5,584.0 1825.8,583.1 1827.2,586.9 1828.5,589.5 1829.8,585.3 1831.2,588.3 1832.5,585.2 1833.9,582.9 1835.2,576.8 1836.6,576.3 1837.9,583.8 1839.3,590.7 1840.6,589.7 1842.0,583.6 1843.3,584.4 1844.7,588.7 1846.0,586.9 1847.3,589.6 1848.7,590.7 1850.0,587.5 1851.4,586.4 1852.7,591.5 1854.1,596.1 1855.4,595.7 1856.8,600.3 1858.1,597.5 1859.5,589.9 1860.8,589.8 1862.2,590.8 1863.5,584.0 1864.9,582.7 1866.2,585.8" fill="none" stroke="#ececec" stroke-width="1.45" stroke-linejoin="round"/>
<circle cx="1322.9" cy="553.3" r="5" fill="#ee1414"/>
<circle cx="1401" cy="531.7" r="5.1" fill="#fff010"/>
<rect x="1035" y="902.2" width="824.2" height="5.6" fill="#4c4c4c"/>
<line x1="1085.4" y1="769.1" x2="1085.4" y2="908.0" stroke="#8e8e8e" stroke-width="1.1"/>
<line x1="1166.0" y1="769.1" x2="1166.0" y2="908.0" stroke="#8e8e8e" stroke-width="1.1"/>
<line x1="1246.4" y1="769.1" x2="1246.4" y2="908.0" stroke="#8e8e8e" stroke-width="1.1"/>
<line x1="1327.0" y1="769.1" x2="1327.0" y2="908.0" stroke="#8e8e8e" stroke-width="1.1"/>
<line x1="1407.4" y1="769.1" x2="1407.4" y2="908.0" stroke="#8e8e8e" stroke-width="1.1"/>
<line x1="1488.0" y1="769.1" x2="1488.0" y2="908.0" stroke="#8e8e8e" stroke-width="1.1"/>
<line x1="1568.4" y1="769.1" x2="1568.4" y2="908.0" stroke="#8e8e8e" stroke-width="1.1"/>
<line x1="1649.0" y1="769.1" x2="1649.0" y2="908.0" stroke="#8e8e8e" stroke-width="1.1"/>
<line x1="1729.4" y1="769.1" x2="1729.4" y2="908.0" stroke="#8e8e8e" stroke-width="1.1"/>
<line x1="1809.8" y1="769.1" x2="1809.8" y2="908.0" stroke="#8e8e8e" stroke-width="1.1"/>
<line x1="1035" y1="797.5" x2="1859.2" y2="797.5" stroke="#8e8e8e" stroke-width="1.1"/>
<line x1="1035" y1="825.4" x2="1859.2" y2="825.4" stroke="#8e8e8e" stroke-width="1.1"/>
<line x1="1035" y1="853.2" x2="1859.2" y2="853.2" stroke="#8e8e8e" stroke-width="1.1"/>
<line x1="1035" y1="881.2" x2="1859.2" y2="881.2" stroke="#8e8e8e" stroke-width="1.1"/>
<rect x="1035" y="769.1" width="824.2" height="138.89999999999998" fill="none" stroke="#9a9a9a" stroke-width="1.6"/>
<line x1="1138.6" y1="770.1" x2="1138.6" y2="908.0" stroke="#e4e43c" stroke-width="2" stroke-dasharray="1.7 1.65"/>
<line x1="1293.2" y1="770.1" x2="1293.2" y2="908.0" stroke="#e4e43c" stroke-width="2" stroke-dasharray="1.7 1.65"/>
<line x1="1447.7" y1="770.1" x2="1447.7" y2="908.0" stroke="#e4e43c" stroke-width="2" stroke-dasharray="1.7 1.65"/>
<line x1="1602.3" y1="770.1" x2="1602.3" y2="908.0" stroke="#e4e43c" stroke-width="2" stroke-dasharray="1.7 1.65"/>
<line x1="1757.2" y1="770.1" x2="1757.2" y2="908.0" stroke="#e4e43c" stroke-width="2" stroke-dasharray="1.7 1.65"/>
<line x1="1477.4" y1="769.1" x2="1477.4" y2="908.0" stroke="#c42222" stroke-width="1.25"/>
<line x1="1035" y1="906.2" x2="1138" y2="906.2" stroke="#d8d8d8" stroke-width="1"/>
<line x1="1758" y1="906.2" x2="1859.2" y2="906.2" stroke="#d8d8d8" stroke-width="1"/>
<path d="M1197.95 908.0 L1198.40 847 L1199.60 847 L1200.05 908.0 Z" fill="#f4f4f4"/>
<path d="M1236.95 908.0 L1237.40 887.3 L1238.60 887.3 L1239.05 908.0 Z" fill="#f4f4f4"/>
<path d="M1255.95 908.0 L1256.40 839.4 L1257.60 839.4 L1258.05 908.0 Z" fill="#f4f4f4"/>
<path d="M1274.95 908.0 L1275.40 834.2 L1276.60 834.2 L1277.05 908.0 Z" fill="#f4f4f4"/>
<path d="M1352.75 908.0 L1353.20 779 L1354.40 779 L1354.85 908.0 Z" fill="#f4f4f4"/>
<path d="M1390.75 908.0 L1391.20 787.3 L1392.40 787.3 L1392.85 908.0 Z" fill="#f4f4f4"/>
<path d="M1410.15 908.0 L1410.60 816.8 L1411.80 816.8 L1412.25 908.0 Z" fill="#f4f4f4"/>
<path d="M1429.45 908.0 L1429.90 862.4 L1431.10 862.4 L1431.55 908.0 Z" fill="#f4f4f4"/>
<path d="M1507.65 908.0 L1508.10 856 L1509.30 856 L1509.75 908.0 Z" fill="#f4f4f4"/>
<path d="M1545.85 908.0 L1546.30 783 L1547.50 783 L1547.95 908.0 Z" fill="#f4f4f4"/>
<path d="M1565.55 908.0 L1566.00 781 L1567.20 781 L1567.65 908.0 Z" fill="#f4f4f4"/>
<path d="M1584.55 908.0 L1585.00 777.8 L1586.20 777.8 L1586.65 908.0 Z" fill="#f4f4f4"/>
<path d="M1661.75 908.0 L1662.20 769.4 L1663.40 769.4 L1663.85 908.0 Z" fill="#f4f4f4"/>
<path d="M1700.45 908.0 L1700.90 859 L1702.10 859 L1702.55 908.0 Z" fill="#f4f4f4"/>
<path d="M1715.55 908.0 L1716.00 904.5 L1717.20 904.5 L1717.65 908.0 Z" fill="#f4f4f4"/>
<path d="M1738.95 908.0 L1739.40 895.3 L1740.60 895.3 L1741.05 908.0 Z" fill="#f4f4f4"/>
</svg>
<div class="t" id="cy0" style="left:1213.50px;top:517.28px;font-size:16.64px;line-height:16.64px;color:#fff;letter-spacing:0.218px;">0.0</div>
<div class="t" id="cy1" style="left:1198.50px;top:546.28px;font-size:16.64px;line-height:16.64px;color:#fff;letter-spacing:0.163px;">-10.0</div>
<div class="t" id="cy2" style="left:1198.50px;top:575.28px;font-size:16.64px;line-height:16.64px;color:#fff;letter-spacing:0.163px;">-20.0</div>
<div class="t" id="cy3" style="left:1198.50px;top:604.28px;font-size:16.64px;line-height:16.64px;color:#fff;letter-spacing:0.163px;">-30.0</div>
<div class="t" id="cy4" style="left:1198.50px;top:633.28px;font-size:16.64px;line-height:16.64px;color:#fff;letter-spacing:0.163px;">-40.0</div>
<div class="t" id="cy5" style="left:1198.50px;top:662.28px;font-size:16.64px;line-height:16.64px;color:#fff;letter-spacing:0.163px;">-50.0</div>
<div class="t" id="cx0" style="left:1267.55px;top:674.34px;font-size:13.73px;line-height:13.73px;color:#fff;letter-spacing:-1.149px;">-60</div>
<div class="t" id="cx1" style="left:1308.95px;top:674.34px;font-size:13.73px;line-height:13.73px;color:#fff;letter-spacing:-1.149px;">-40</div>
<div class="t" id="cx2" style="left:1350.25px;top:674.34px;font-size:13.73px;line-height:13.73px;color:#fff;letter-spacing:-1.149px;">-20</div>
<div class="t" id="cx3" style="left:1397.40px;top:674.34px;font-size:13.73px;line-height:13.73px;color:#fff;letter-spacing:-1.600px;">0</div>
<div class="t" id="cx4" style="left:1434.85px;top:674.34px;font-size:13.73px;line-height:13.73px;color:#fff;letter-spacing:-1.530px;">20</div>
<div class="t" id="cx5" style="left:1476.25px;top:674.34px;font-size:13.73px;line-height:13.73px;color:#fff;letter-spacing:-1.530px;">40</div>
<div class="t" id="cx6" style="left:1517.55px;top:674.34px;font-size:13.73px;line-height:13.73px;color:#fff;letter-spacing:-1.530px;">60</div>
<div class="t" id="cx7" style="left:1558.95px;top:674.34px;font-size:13.73px;line-height:13.73px;color:#fff;letter-spacing:-1.530px;">80</div>
<div class="t" id="cx8" style="left:1596.30px;top:674.34px;font-size:13.73px;line-height:13.73px;color:#fff;letter-spacing:-1.130px;">100</div>
<div class="t" id="cx9" style="left:1637.70px;top:674.34px;font-size:13.73px;line-height:13.73px;color:#fff;letter-spacing:-1.130px;">120</div>
<div class="t" id="cx10" style="left:1679.00px;top:674.34px;font-size:13.73px;line-height:13.73px;color:#fff;letter-spacing:-1.130px;">140</div>
<div class="t" id="cx11" style="left:1720.40px;top:674.34px;font-size:13.73px;line-height:13.73px;color:#fff;letter-spacing:-1.130px;">160</div>
<div class="t" id="cx12" style="left:1761.70px;top:674.34px;font-size:13.73px;line-height:13.73px;color:#fff;letter-spacing:-1.130px;">180</div>
<div class="t" id="cx13" style="left:1804.10px;top:674.34px;font-size:13.73px;line-height:13.73px;color:#fff;letter-spacing:-1.630px;">200</div>
<div class="t" id="cx14" style="left:1845.40px;top:674.34px;font-size:13.73px;line-height:13.73px;color:#fff;letter-spacing:-1.630px;">220</div>
<div class="t" id="distlab" style="left:1463.50px;top:693.87px;font-size:17.06px;line-height:17.06px;color:#fff;letter-spacing:0.062px;">Distance Difference (km)</div>
<div class="t" id="maglab2" style="left:1172.4px;top:597px;font-size:15.6px;line-height:16px;color:#fff;font-weight:bold;transform:translate(-50%,-50%) rotate(-90deg);letter-spacing:0.048px">Magnitude (dB)</div>
<div class="b" style="left:925px;top:727.2px;width:947px;height:24.7px;background:#0f2c51;"></div>
<div class="t" id="tiititle" style="left:1379.00px;top:730.45px;font-size:18.51px;line-height:18.51px;color:#fff;letter-spacing:-0.459px;">TII Carriers</div>
<div class="t" id="ty0" style="left:998.50px;top:762.28px;font-size:16.64px;line-height:16.64px;color:#fff;letter-spacing:0.318px;">1.0</div>
<div class="t" id="ty1" style="left:999.50px;top:789.68px;font-size:16.64px;line-height:16.64px;color:#fff;letter-spacing:-0.182px;">0.8</div>
<div class="t" id="ty2" style="left:999.50px;top:817.88px;font-size:16.64px;line-height:16.64px;color:#fff;letter-spacing:-0.182px;">0.6</div>
<div class="t" id="ty3" style="left:999.50px;top:846.28px;font-size:16.64px;line-height:16.64px;color:#fff;letter-spacing:-0.182px;">0.4</div>
<div class="t" id="ty4" style="left:999.50px;top:874.08px;font-size:16.64px;line-height:16.64px;color:#fff;letter-spacing:-0.182px;">0.2</div>
<div class="t" id="ty5" style="left:999.50px;top:901.28px;font-size:16.64px;line-height:16.64px;color:#fff;letter-spacing:-0.182px;">0.0</div>
<div class="t" id="tx0" style="left:985.00px;width:200px;text-align:center;top:913.49px;font-size:16.22px;line-height:16.22px;color:#fff;letter-spacing:0.0px;padding-left:0.0px;box-sizing:border-box;">-900</div>
<div class="t" id="tx1" style="left:1065.60px;width:200px;text-align:center;top:913.49px;font-size:16.22px;line-height:16.22px;color:#fff;letter-spacing:0.0px;padding-left:0.0px;box-sizing:border-box;">-700</div>
<div class="t" id="tx2" style="left:1146.00px;width:200px;text-align:center;top:913.49px;font-size:16.22px;line-height:16.22px;color:#fff;letter-spacing:0.0px;padding-left:0.0px;box-sizing:border-box;">-500</div>
<div class="t" id="tx3" style="left:1226.60px;width:200px;text-align:center;top:913.49px;font-size:16.22px;line-height:16.22px;color:#fff;letter-spacing:0.0px;padding-left:0.0px;box-sizing:border-box;">-300</div>
<div class="t" id="tx4" style="left:1307.00px;width:200px;text-align:center;top:913.49px;font-size:16.22px;line-height:16.22px;color:#fff;letter-spacing:0.0px;padding-left:0.0px;box-sizing:border-box;">-100</div>
<div class="t" id="tx5" style="left:1387.60px;width:200px;text-align:center;top:913.49px;font-size:16.22px;line-height:16.22px;color:#fff;letter-spacing:0.0px;padding-left:0.0px;box-sizing:border-box;">100</div>
<div class="t" id="tx6" style="left:1468.00px;width:200px;text-align:center;top:913.49px;font-size:16.22px;line-height:16.22px;color:#fff;letter-spacing:0.0px;padding-left:0.0px;box-sizing:border-box;">300</div>
<div class="t" id="tx7" style="left:1548.60px;width:200px;text-align:center;top:913.49px;font-size:16.22px;line-height:16.22px;color:#fff;letter-spacing:0.0px;padding-left:0.0px;box-sizing:border-box;">500</div>
<div class="t" id="tx8" style="left:1629.00px;width:200px;text-align:center;top:913.49px;font-size:16.22px;line-height:16.22px;color:#fff;letter-spacing:0.0px;padding-left:0.0px;box-sizing:border-box;">700</div>
<div class="t" id="tx9" style="left:1709.40px;width:200px;text-align:center;top:913.49px;font-size:16.22px;line-height:16.22px;color:#fff;letter-spacing:0.0px;padding-left:0.0px;box-sizing:border-box;">900</div>
<div class="t" id="tiisub" style="left:1396.60px;top:937.47px;font-size:17.06px;line-height:17.06px;color:#fff;letter-spacing:-0.137px;">TII Subcarrier</div>
<div class="t" id="maglab3" style="left:973.3px;top:839.5px;font-size:15.6px;line-height:16px;color:#fff;font-weight:bold;transform:translate(-50%,-50%) rotate(-90deg);letter-spacing:-0.211px">Magnitude</div>
</body></html>
